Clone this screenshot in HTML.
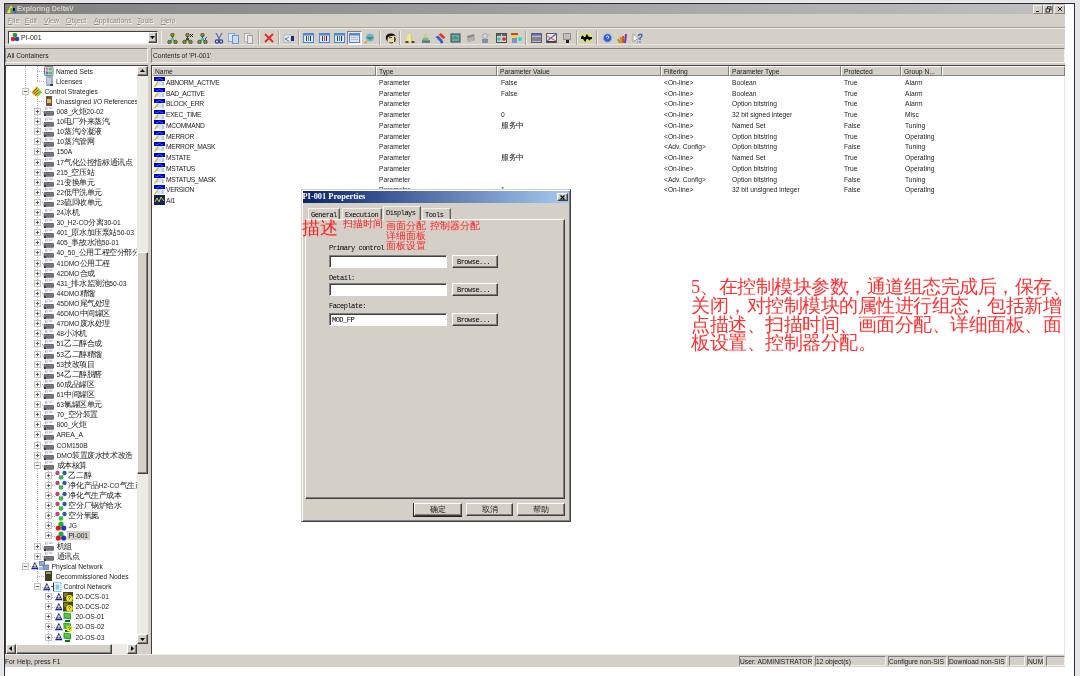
<!DOCTYPE html><html><head><meta charset="utf-8"><style>
*{margin:0;padding:0;box-sizing:border-box}
html,body{width:1080px;height:676px;overflow:hidden;background:#e5e5e7;font-family:"Liberation Sans",sans-serif;}
.ab{position:absolute}
.t{position:absolute;white-space:nowrap;font-size:6.7px;line-height:8px;color:#1c1c1c}
.sunk{border-top:1px solid #808080;border-left:1px solid #808080;border-bottom:1px solid #f2f1ed;border-right:1px solid #f2f1ed}
.rais{border-top:1px solid #fff;border-left:1px solid #fff;border-bottom:1px solid #404040;border-right:1px solid #404040;background:#d4d0c8}
.btn{position:absolute;background:#d4d0c8;border:1px solid;border-color:#fff #404040 #404040 #fff;box-shadow:inset -1px -1px 0 #808080}
.exp{position:absolute;width:6px;height:6px;border:1px solid #a0a0a0;background:#fff}
.exp:before{content:"";position:absolute;left:1px;top:2px;width:2px;height:1px;background:#000}
.exp.p:after{content:"";position:absolute;left:2px;top:1px;width:1px;height:3px;background:#000}
.vl{position:absolute;width:0;border-left:1px dotted #b4b4b4}
.hl{position:absolute;height:0;border-top:1px dotted #b4b4b4}
.red{color:#ff2020}
</style></head><body><div id="root" style="position:absolute;left:0;top:0;width:1080px;height:676px;overflow:hidden;will-change:transform">
<div class="ab" style="left:3px;top:2px;width:1073px;height:680px;background:#ededef"></div>
<div class="ab" style="left:4px;top:3px;width:1071px;height:680px;background:#fff;border:1px solid #2a2a2a"></div>
<div class="ab" style="left:5px;top:4px;width:1060px;height:663px;background:#d4d0c8"></div>
<div class="ab" style="left:5px;top:4px;width:1060px;height:10px;background:linear-gradient(90deg,#808080,#c0c0c0)"></div>
<div class="t" style="left:17px;top:5px;font-size:7.1px;font-weight:bold;color:#d8d4cc;line-height:8px">Exploring DeltaV</div>
<svg class="ab" style="left:6px;top:4px" width="11" height="10"><polygon points="1,9 5,1 7,5 4,9" fill="#e0f020"/><circle cx="6" cy="6" r="2" fill="#40a0a0"/><rect x="7" y="4" width="2" height="3" fill="#000"/><circle cx="9" cy="8" r="1.5" fill="#4070d0"/></svg>
<div class="ab" style="left:1033.0px;top:4.5px;width:9.5px;height:9px;background:#d4d0c8;border:1px solid;border-color:#f0efea #808080 #808080 #f0efea"></div>
<div class="ab" style="left:1043.0px;top:4.5px;width:9.5px;height:9px;background:#d4d0c8;border:1px solid;border-color:#f0efea #808080 #808080 #f0efea"></div>
<div class="ab" style="left:1054.0px;top:4.5px;width:10.5px;height:9px;background:#d4d0c8;border:1px solid;border-color:#f0efea #808080 #808080 #f0efea"></div>
<div class="ab" style="left:1036px;top:10.5px;width:3px;height:1.2px;background:#202020"></div>
<svg class="ab" style="left:1045px;top:6px" width="7" height="7"><rect x="2.5" y="0.8" width="3.5" height="3" fill="none" stroke="#202020" stroke-width="0.9"/><rect x="1" y="2.8" width="3.5" height="3.2" fill="#d4d0c8" stroke="#202020" stroke-width="0.9"/></svg>
<svg class="ab" style="left:1056.5px;top:6.3px" width="6" height="6"><path d="M0.8,0.8L5.2,5.2M5.2,0.8L0.8,5.2" stroke="#202020" stroke-width="1"/></svg>
<div class="t" style="left:8px;top:17px;color:#8e8b86;text-shadow:0.6px 0.6px 0 #fff;font-size:7px"><u style="text-decoration-thickness:0.6px;text-underline-offset:1px">F</u>ile</div>
<div class="t" style="left:25px;top:17px;color:#8e8b86;text-shadow:0.6px 0.6px 0 #fff;font-size:7px"><u style="text-decoration-thickness:0.6px;text-underline-offset:1px">E</u>dit</div>
<div class="t" style="left:44px;top:17px;color:#8e8b86;text-shadow:0.6px 0.6px 0 #fff;font-size:7px"><u style="text-decoration-thickness:0.6px;text-underline-offset:1px">V</u>iew</div>
<div class="t" style="left:66px;top:17px;color:#8e8b86;text-shadow:0.6px 0.6px 0 #fff;font-size:7px"><u style="text-decoration-thickness:0.6px;text-underline-offset:1px">O</u>bject</div>
<div class="t" style="left:94px;top:17px;color:#8e8b86;text-shadow:0.6px 0.6px 0 #fff;font-size:7px"><u style="text-decoration-thickness:0.6px;text-underline-offset:1px">A</u>pplications</div>
<div class="t" style="left:137px;top:17px;color:#8e8b86;text-shadow:0.6px 0.6px 0 #fff;font-size:7px"><u style="text-decoration-thickness:0.6px;text-underline-offset:1px">T</u>ools</div>
<div class="t" style="left:161px;top:17px;color:#8e8b86;text-shadow:0.6px 0.6px 0 #fff;font-size:7px"><u style="text-decoration-thickness:0.6px;text-underline-offset:1px">H</u>elp</div>
<div class="ab" style="left:5px;top:27px;width:1060px;height:1px;background:#a8a49c"></div>
<div class="ab" style="left:5px;top:28px;width:1060px;height:1px;background:#ecebe6"></div>
<div class="ab sunk" style="left:8px;top:31px;width:150px;height:13px;background:#fff;border-top-color:#404040;border-left-color:#404040"></div>
<div class="btn" style="left:148px;top:32px;width:9px;height:11px"></div>
<svg class="ab" style="left:150px;top:36px" width="5" height="3"><polygon points="0,0 5,0 2.5,3" fill="#000"/></svg>
<svg class="ab" style="left:10px;top:32px" width="10" height="10"><circle cx="5" cy="3" r="2.3" fill="#20a020"/><circle cx="3" cy="7" r="2.3" fill="#e02020"/><circle cx="7" cy="7" r="2.3" fill="#2040d0"/></svg>
<div class="t" style="left:21px;top:34px;font-size:7px">PI-001</div>
<div class="ab" style="left:5px;top:44px;width:1060px;height:1px;background:#e6e4de"></div>
<div class="ab" style="left:161px;top:31px;width:1px;height:14px;background:#ecebe6"></div>
<div class="ab" style="left:257.5px;top:31px;width:1px;height:14px;background:#aaa69e"></div><div class="ab" style="left:258.5px;top:31px;width:1px;height:14px;background:#ecebe6"></div>
<div class="ab" style="left:277.5px;top:31px;width:1px;height:14px;background:#aaa69e"></div><div class="ab" style="left:278.5px;top:31px;width:1px;height:14px;background:#ecebe6"></div>
<div class="ab" style="left:297.5px;top:31px;width:1px;height:14px;background:#aaa69e"></div><div class="ab" style="left:298.5px;top:31px;width:1px;height:14px;background:#ecebe6"></div>
<div class="ab" style="left:379.0px;top:31px;width:1px;height:14px;background:#aaa69e"></div><div class="ab" style="left:380.0px;top:31px;width:1px;height:14px;background:#ecebe6"></div>
<div class="ab" style="left:399.0px;top:31px;width:1px;height:14px;background:#aaa69e"></div><div class="ab" style="left:400.0px;top:31px;width:1px;height:14px;background:#ecebe6"></div>
<div class="ab" style="left:525.0px;top:31px;width:1px;height:14px;background:#aaa69e"></div><div class="ab" style="left:526.0px;top:31px;width:1px;height:14px;background:#ecebe6"></div>
<div class="ab" style="left:576.0px;top:31px;width:1px;height:14px;background:#aaa69e"></div><div class="ab" style="left:577.0px;top:31px;width:1px;height:14px;background:#ecebe6"></div>
<div class="ab" style="left:596.0px;top:31px;width:1px;height:14px;background:#aaa69e"></div><div class="ab" style="left:597.0px;top:31px;width:1px;height:14px;background:#ecebe6"></div>
<svg class="ab" style="left:166.5px;top:32.5px" width="12" height="11"><path d="M5.5,2L5.5,6M5.5,6L2.5,9M5.5,6L8.5,9" stroke="#404020" stroke-width="1"/><circle cx="5.5" cy="2" r="1.8" fill="#8a8a30" stroke="#303010" stroke-width="0.6"/><circle cx="2.5" cy="9" r="1.8" fill="#8a8a30" stroke="#303010" stroke-width="0.6"/><circle cx="8.5" cy="9" r="1.8" fill="#8a8a30" stroke="#303010" stroke-width="0.6"/><circle cx="5.5" cy="6" r="1.6" fill="#20d0d0"/><path d="M7,2L11,3L8,5" fill="#e0e020"/></svg>
<svg class="ab" style="left:181.5px;top:32.5px" width="12" height="11"><path d="M5.5,2L5.5,6M5.5,6L2.5,9M5.5,6L8.5,9" stroke="#404020" stroke-width="1"/><circle cx="5.5" cy="2" r="1.8" fill="#8a8a30" stroke="#303010" stroke-width="0.6"/><circle cx="2.5" cy="9" r="1.8" fill="#8a8a30" stroke="#303010" stroke-width="0.6"/><circle cx="8.5" cy="9" r="1.8" fill="#8a8a30" stroke="#303010" stroke-width="0.6"/><circle cx="5.5" cy="6" r="1.6" fill="#105030"/><path d="M8,1L11,4M11,1L8,4" stroke="#202020" stroke-width="1"/></svg>
<svg class="ab" style="left:196.5px;top:32.5px" width="12" height="11"><path d="M5.5,2L5.5,6M5.5,6L2.5,9M5.5,6L8.5,9" stroke="#404020" stroke-width="1"/><circle cx="5.5" cy="2" r="1.8" fill="#8a8a30" stroke="#303010" stroke-width="0.6"/><circle cx="2.5" cy="9" r="1.8" fill="#8a8a30" stroke="#303010" stroke-width="0.6"/><circle cx="8.5" cy="9" r="1.8" fill="#8a8a30" stroke="#303010" stroke-width="0.6"/><circle cx="5.5" cy="6" r="1.6" fill="#20c0d0"/><path d="M10,4L8,6L10,8" stroke="#4050c0" stroke-width="1" fill="none"/></svg>
<svg class="ab" style="left:214.0px;top:32.5px" width="10" height="11"><path d="M2,0L6,7M8,0L4,7" stroke="#6070b0" stroke-width="1.2"/><circle cx="3" cy="8.5" r="1.7" fill="none" stroke="#3040a0" stroke-width="1.2"/><circle cx="7" cy="8.5" r="1.7" fill="none" stroke="#3040a0" stroke-width="1.2"/></svg>
<svg class="ab" style="left:228.0px;top:32.5px" width="12" height="11"><rect x="0.5" y="0.5" width="6" height="8" fill="#d8e8ff" stroke="#90a8d8"/><rect x="4.5" y="2.5" width="6" height="8" fill="#c8dcff" stroke="#7090d0"/></svg>
<svg class="ab" style="left:244.0px;top:32.5px" width="10" height="11"><rect x="0.5" y="0.5" width="5" height="8" fill="#f0f0f0" stroke="#b0b0b0"/><rect x="3.5" y="2.5" width="5" height="8" fill="#e8e8e8" stroke="#a0a0a0"/></svg>
<svg class="ab" style="left:263.5px;top:32.5px" width="10" height="11"><path d="M1,1L9,9M9,1L1,9" stroke="#e02828" stroke-width="1.8"/></svg>
<svg class="ab" style="left:283.0px;top:32.5px" width="12" height="11"><rect x="1" y="2" width="7" height="7" fill="#e8f0f8" stroke="#a0a8b0" stroke-width="0.7"/><path d="M2,6L6,4M2,6L6,8" stroke="#5080a0" stroke-width="1"/><rect x="8" y="3" width="3" height="5" fill="#202880"/></svg>
<svg class="ab" style="left:303.0px;top:32.5px" width="12" height="11"><rect x="0.5" y="0.5" width="10" height="9" fill="#d8e8f8" stroke="#4a88d8"/><rect x="1" y="1" width="9" height="1.5" fill="#4a88d8"/><rect x="3" y="3" width="1" height="5" fill="#404040"/><rect x="5" y="3" width="1" height="5" fill="#50a050"/><rect x="7" y="3" width="1" height="5" fill="#303030"/></svg>
<svg class="ab" style="left:318.5px;top:32.5px" width="12" height="11"><rect x="0.5" y="0.5" width="10" height="9" fill="#d8e8f8" stroke="#4a88d8"/><rect x="1" y="1" width="9" height="1.5" fill="#4a88d8"/><rect x="3" y="3" width="1" height="5" fill="#404040"/><rect x="5" y="3" width="1" height="5" fill="#e04040"/><rect x="7" y="3" width="1" height="5" fill="#303030"/></svg>
<svg class="ab" style="left:334.0px;top:32.5px" width="12" height="11"><rect x="0.5" y="0.5" width="10" height="9" fill="#d8e8f8" stroke="#4a88d8"/><rect x="1" y="1" width="9" height="1.5" fill="#4a88d8"/><rect x="3" y="3" width="1" height="5" fill="#404040"/><rect x="5" y="3" width="1" height="5" fill="#40a040"/><rect x="7" y="3" width="1" height="5" fill="#303030"/></svg>
<div class="ab" style="left:346.5px;top:30.5px;width:15px;height:14.5px;background:#ecebe8;border:1px solid;border-color:#808080 #fff #fff #808080"></div>
<svg class="ab" style="left:349.0px;top:32.5px" width="12" height="11"><rect x="0.5" y="0.5" width="10" height="9" fill="#d8e8f8" stroke="#4a88d8"/><rect x="1" y="1" width="9" height="1.5" fill="#4a88d8"/><path d="M2,4.5h7M2,6.5h7" stroke="#e0a0a0" stroke-width="0.8"/></svg>
<svg class="ab" style="left:363.5px;top:32.5px" width="12" height="11"><circle cx="6" cy="4.5" r="4" fill="#70b0e8"/><path d="M2,4h8L6,7z" fill="#30a030"/><path d="M0.5,10.5L3,8" stroke="#d0a040" stroke-width="1.5"/></svg>
<svg class="ab" style="left:384.5px;top:32.5px" width="12" height="11"><path d="M1,6Q0,1 5,0.5Q10,0 10.5,3Q9,2 7,3L3,4Q2,6 2.5,9z" fill="#101010"/><ellipse cx="6.5" cy="6.5" rx="3" ry="3.6" fill="#e8d8a8"/><path d="M4,5Q5,4 7,4.5M4.5,9.5Q6,10.5 8,9.5" stroke="#302010" stroke-width="0.9" fill="none"/><path d="M9.5,4Q11,6 9.5,9" stroke="#101010" stroke-width="1"/></svg>
<svg class="ab" style="left:405.0px;top:32.5px" width="10" height="11"><path d="M4.5,0.8Q6.5,0.8 6.8,3.5L7.8,8.5H1.2L2.3,3.5Q2.8,0.8 4.5,0.8z" fill="#f8e890"/><path d="M6,2L7,8" stroke="#d0b050" stroke-width="0.8"/><ellipse cx="2" cy="9" rx="1.8" ry="0.9" fill="#503010"/><ellipse cx="8" cy="9" rx="1.8" ry="0.9" fill="#503010"/></svg>
<svg class="ab" style="left:420.5px;top:32.5px" width="10" height="11"><circle cx="4.5" cy="1.8" r="1.5" fill="#c8d080"/><rect x="3" y="3.3" width="3" height="1.5" fill="#c0c0c0"/><rect x="1.5" y="4.8" width="6" height="2.5" fill="#80c050"/><rect x="1" y="7.3" width="8" height="2.5" fill="#5870a0"/></svg>
<svg class="ab" style="left:435.0px;top:32.5px" width="11" height="11"><polygon points="3.5,1.5 6,0 10.5,4.5 8,6" fill="#f03818"/><polygon points="0.5,4 3,2.5 7.5,7 5,8.5" fill="#2868d0"/><polygon points="5,8.5 7.5,7 8,10 6,10.5" fill="#1850b0"/></svg>
<svg class="ab" style="left:449.5px;top:32.5px" width="12" height="11"><rect x="0.5" y="0.5" width="10" height="9" fill="#404040"/><rect x="1.5" y="1.5" width="8" height="7" fill="#60a8c8"/><path d="M1.5,6L5,3L9.5,6" fill="#40a040"/></svg>
<svg class="ab" style="left:466.0px;top:32.5px" width="10" height="11"><polygon points="1,3 8,1 9,7 2,9" fill="#888"/><polygon points="2,5 9,3 9,7 2,9" fill="#b0b0b0"/></svg>
<svg class="ab" style="left:480.5px;top:32.5px" width="10" height="11"><circle cx="4" cy="3" r="2.5" fill="#d0d8e0" stroke="#909090" stroke-width="0.7"/><rect x="1" y="6" width="6" height="4" fill="#8090a8"/><path d="M7,1L9,3" stroke="#e0b080"/></svg>
<svg class="ab" style="left:495.5px;top:32.5px" width="12" height="11"><rect x="0.5" y="0.5" width="10" height="9" fill="#d0d0d0" stroke="#505050"/><rect x="1" y="1" width="4" height="2" fill="#606060"/><rect x="6" y="1" width="4" height="2" fill="#606060"/><circle cx="3" cy="6" r="1.8" fill="#20d0d0"/><circle cx="8" cy="6" r="1.8" fill="#e02020"/></svg>
<svg class="ab" style="left:510.8px;top:32.5px" width="12" height="11"><rect x="0" y="0" width="7" height="2" fill="#d04040"/><rect x="0" y="2" width="7" height="3" fill="#e0e040"/><rect x="1" y="5" width="5" height="5" fill="#8090d0"/><circle cx="9" cy="6" r="2" fill="#20d8e0"/></svg>
<svg class="ab" style="left:530.7px;top:32.5px" width="12" height="11"><rect x="0.5" y="0.5" width="10" height="9" fill="#b8b8c8" stroke="#606070"/><rect x="1" y="1" width="9" height="1.5" fill="#6060c0"/><path d="M1,5h9M1,7h9" stroke="#505050" stroke-width="1"/></svg>
<svg class="ab" style="left:546.0px;top:32.5px" width="12" height="11"><rect x="0.5" y="0.5" width="10" height="9" fill="#f0e0e0" stroke="#606060"/><path d="M1,8L10,1" stroke="#4070d0" stroke-width="1.2"/><path d="M1,3L10,8" stroke="#e05050" stroke-width="1"/><rect x="1" y="8" width="9" height="1.5" fill="#404040"/></svg>
<svg class="ab" style="left:562.7px;top:32.5px" width="10" height="11"><rect x="0" y="0" width="8" height="7" fill="#909090"/><rect x="1" y="1" width="6" height="5" fill="#c0c0c0"/><rect x="3" y="7" width="3" height="3" fill="#202020"/></svg>
<svg class="ab" style="left:581.0px;top:32.5px" width="12" height="11"><rect x="0" y="1" width="11" height="8" fill="#e0e060"/><path d="M1,3L4,7L6,3L9,7M0,5h11" stroke="#000" stroke-width="2"/></svg>
<svg class="ab" style="left:603.0px;top:32.5px" width="10" height="11"><circle cx="4.5" cy="5" r="4.3" fill="#3060d0" stroke="#a0c0f0" stroke-width="0.8"/><path d="M3,4Q4.5,2 6,4L4.5,6" stroke="#fff" stroke-width="0.9" fill="none"/></svg>
<svg class="ab" style="left:617.3px;top:32.5px" width="12" height="11"><path d="M1,6L3,10M3.5,4L5,10M6,3L6.5,10M9,1L8,10" stroke-width="2" stroke="#c09020"/><path d="M6,3L6.5,10" stroke="#e04020" stroke-width="1.5"/><path d="M9,1L8,10" stroke="#6040d0" stroke-width="1.8"/></svg>
<svg class="ab" style="left:632.0px;top:32.5px" width="12" height="11"><polygon points="1,1 1,9 3,7 5,10 6,9 4,6 7,6" fill="#fff" stroke="#808080" stroke-width="0.6"/><path d="M6,3Q8,0 10,2Q10,4 8,5L8,7" stroke="#3060c0" stroke-width="1.3" fill="none"/><circle cx="8" cy="9" r="0.8" fill="#3060c0"/></svg>
<div class="ab sunk" style="left:5px;top:48px;width:143px;height:15px"></div>
<div class="t" style="left:7px;top:52px">All Containers</div>
<div class="ab sunk" style="left:151px;top:48px;width:914px;height:15px"></div>
<div class="t" style="left:153px;top:52px">Contents of 'PI-001'</div>
<div class="ab" style="left:5px;top:65px;width:143px;height:589px;background:#fff;border-top:1px solid #404040;border-left:1px solid #404040"></div>
<div class="ab" style="left:6px;top:66px;width:131px;height:578px;overflow:hidden">
<div class="vl" style="left:19.0px;top:0.0px;height:500.2px"></div>
<div class="vl" style="left:30.5px;top:0.0px;height:15.1px"></div>
<div class="vl" style="left:30.5px;top:28.2px;height:461.9px"></div>
<div class="vl" style="left:42.0px;top:402.2px;height:67.7px"></div>
<div class="vl" style="left:30.5px;top:503.2px;height:17.2px"></div>
<div class="vl" style="left:42.0px;top:523.5px;height:54.5px"></div>
<div class="hl" style="left:31.0px;top:5.0px;width:6.5px"></div>
<div class="hl" style="left:31.0px;top:15.1px;width:6.5px"></div>
<div class="hl" style="left:22.0px;top:25.2px;width:3.0px"></div>
<div class="hl" style="left:31.0px;top:35.3px;width:6.5px"></div>
<div class="hl" style="left:34.0px;top:45.4px;width:2.6px"></div>
<div class="hl" style="left:34.0px;top:55.5px;width:2.6px"></div>
<div class="hl" style="left:34.0px;top:65.6px;width:2.6px"></div>
<div class="hl" style="left:34.0px;top:75.7px;width:2.6px"></div>
<div class="hl" style="left:34.0px;top:85.9px;width:2.6px"></div>
<div class="hl" style="left:34.0px;top:96.0px;width:2.6px"></div>
<div class="hl" style="left:34.0px;top:106.1px;width:2.6px"></div>
<div class="hl" style="left:34.0px;top:116.2px;width:2.6px"></div>
<div class="hl" style="left:34.0px;top:126.3px;width:2.6px"></div>
<div class="hl" style="left:34.0px;top:136.4px;width:2.6px"></div>
<div class="hl" style="left:34.0px;top:146.5px;width:2.6px"></div>
<div class="hl" style="left:34.0px;top:156.6px;width:2.6px"></div>
<div class="hl" style="left:34.0px;top:166.7px;width:2.6px"></div>
<div class="hl" style="left:34.0px;top:176.8px;width:2.6px"></div>
<div class="hl" style="left:34.0px;top:186.9px;width:2.6px"></div>
<div class="hl" style="left:34.0px;top:197.0px;width:2.6px"></div>
<div class="hl" style="left:34.0px;top:207.1px;width:2.6px"></div>
<div class="hl" style="left:34.0px;top:217.2px;width:2.6px"></div>
<div class="hl" style="left:34.0px;top:227.4px;width:2.6px"></div>
<div class="hl" style="left:34.0px;top:237.5px;width:2.6px"></div>
<div class="hl" style="left:34.0px;top:247.6px;width:2.6px"></div>
<div class="hl" style="left:34.0px;top:257.7px;width:2.6px"></div>
<div class="hl" style="left:34.0px;top:267.8px;width:2.6px"></div>
<div class="hl" style="left:34.0px;top:277.9px;width:2.6px"></div>
<div class="hl" style="left:34.0px;top:288.0px;width:2.6px"></div>
<div class="hl" style="left:34.0px;top:298.1px;width:2.6px"></div>
<div class="hl" style="left:34.0px;top:308.2px;width:2.6px"></div>
<div class="hl" style="left:34.0px;top:318.3px;width:2.6px"></div>
<div class="hl" style="left:34.0px;top:328.4px;width:2.6px"></div>
<div class="hl" style="left:34.0px;top:338.5px;width:2.6px"></div>
<div class="hl" style="left:34.0px;top:348.6px;width:2.6px"></div>
<div class="hl" style="left:34.0px;top:358.7px;width:2.6px"></div>
<div class="hl" style="left:34.0px;top:368.9px;width:2.6px"></div>
<div class="hl" style="left:34.0px;top:379.0px;width:2.6px"></div>
<div class="hl" style="left:34.0px;top:389.1px;width:2.6px"></div>
<div class="hl" style="left:34.0px;top:399.2px;width:2.6px"></div>
<div class="hl" style="left:45.0px;top:409.3px;width:3.5px"></div>
<div class="hl" style="left:45.0px;top:419.4px;width:3.5px"></div>
<div class="hl" style="left:45.0px;top:429.5px;width:3.5px"></div>
<div class="hl" style="left:45.0px;top:439.6px;width:3.5px"></div>
<div class="hl" style="left:45.0px;top:449.7px;width:3.5px"></div>
<div class="hl" style="left:45.0px;top:459.8px;width:3.5px"></div>
<div class="hl" style="left:45.0px;top:469.9px;width:3.5px"></div>
<div class="hl" style="left:34.0px;top:480.0px;width:2.6px"></div>
<div class="hl" style="left:34.0px;top:490.1px;width:2.6px"></div>
<div class="hl" style="left:22.0px;top:500.2px;width:3.0px"></div>
<div class="hl" style="left:31.0px;top:510.3px;width:7.0px"></div>
<div class="hl" style="left:34.0px;top:520.5px;width:2.6px"></div>
<div class="hl" style="left:45.0px;top:530.6px;width:4.0px"></div>
<div class="hl" style="left:45.0px;top:540.7px;width:4.0px"></div>
<div class="hl" style="left:45.0px;top:550.8px;width:4.0px"></div>
<div class="hl" style="left:45.0px;top:560.9px;width:4.0px"></div>
<div class="hl" style="left:45.0px;top:571.0px;width:4.0px"></div>
<svg class="ab" style="left:37.5px;top:0.0px" width="10" height="10"><rect x="0.5" y="0.3" width="8.5" height="9.4" rx="1.2" fill="#f4f4f8" stroke="#404040" stroke-width="0.7"/><rect x="1.6" y="1.4" width="3" height="3.2" fill="#e08090"/><rect x="5" y="1.4" width="3" height="3.2" fill="#60b8a0"/><rect x="1.6" y="5.4" width="3" height="3.2" fill="#5080d0"/><rect x="5" y="5.4" width="3" height="3.2" fill="#60c060"/></svg>
<div class="t" style="left:50.0px;top:1.5px">Named Sets</div>
<svg class="ab" style="left:37.5px;top:10.1px" width="10" height="10"><rect x="2" y="0" width="7" height="10" fill="#a0b0c8"/><rect x="3" y="2" width="4" height="6" fill="#c0d0e0"/><rect x="6" y="8" width="3" height="2" fill="#404040"/></svg>
<div class="t" style="left:50.0px;top:11.6px">Licenses</div>
<svg class="ab" style="left:15.8px;top:21.7px" width="7" height="7"><rect x="0.5" y="0.5" width="6" height="6" fill="#f8f8f8" stroke="#c4c4c4"/><path d="M1.8,3.5H5.2" stroke="#404040" stroke-width="0.8"/></svg>
<svg class="ab" style="left:24.5px;top:19.7px" width="12" height="11"><polygon points="5.5,0.3 11,6.5 6,10.8 0.5,7" fill="#e8c010"/><path d="M1.5,6.2L6.5,1.8M2.5,8L8,3.3M4,9.5L9.5,4.8" stroke="#904000" stroke-width="1"/><polygon points="5.5,0.3 11,6.5 6,10.8 8,5" fill="#58d820" opacity="0.85"/><path d="M7,2.5L9.5,5M6.5,5L9,7.5" stroke="#a0f060" stroke-width="0.6"/></svg>
<div class="t" style="left:38.4px;top:21.7px">Control Strategies</div>
<svg class="ab" style="left:37.5px;top:30.3px" width="10" height="10"><rect x="2" y="0" width="6" height="10" fill="#705040"/><rect x="3" y="3" width="4" height="4" fill="#e0c040"/></svg>
<div class="t" style="left:50.0px;top:31.8px">Unassigned I/O References</div>
<svg class="ab" style="left:27.8px;top:41.9px" width="7" height="7"><rect x="0.5" y="0.5" width="6" height="6" fill="#f8f8f8" stroke="#c4c4c4"/><path d="M1.8,3.5H5.2" stroke="#404040" stroke-width="0.8"/><path d="M3.5,1.8V5.2" stroke="#404040" stroke-width="0.8"/></svg>
<svg class="ab" style="left:36.6px;top:40.4px" width="12" height="11"><rect x="1.5" y="0.5" width="9" height="1" fill="#d8e0f8"/><path d="M2.5,1.5v2.2M4,1.5v2.2M6,2.2h3.5" stroke="#8898c8" stroke-width="0.8"/><rect x="0.7" y="5" width="10.3" height="4.8" rx="1.2" fill="#686868"/><path d="M1.5,6.5h8.5M1.5,8h8.5" stroke="#8a8a8a" stroke-width="0.6"/><rect x="1" y="8.4" width="2" height="1.4" fill="#202020"/></svg>
<div class="t" style="left:50.5px;top:41.9px">008_<span style="display:inline-block;width:7.60px;font-size:8.0px;line-height:8px;vertical-align:top;font-weight:500">火</span><span style="display:inline-block;width:7.60px;font-size:8.0px;line-height:8px;vertical-align:top;font-weight:500">炬</span>20-02</div>
<svg class="ab" style="left:27.8px;top:52.0px" width="7" height="7"><rect x="0.5" y="0.5" width="6" height="6" fill="#f8f8f8" stroke="#c4c4c4"/><path d="M1.8,3.5H5.2" stroke="#404040" stroke-width="0.8"/><path d="M3.5,1.8V5.2" stroke="#404040" stroke-width="0.8"/></svg>
<svg class="ab" style="left:36.6px;top:50.5px" width="12" height="11"><rect x="1.5" y="0.5" width="9" height="1" fill="#d8e0f8"/><path d="M2.5,1.5v2.2M4,1.5v2.2M6,2.2h3.5" stroke="#8898c8" stroke-width="0.8"/><rect x="0.7" y="5" width="10.3" height="4.8" rx="1.2" fill="#686868"/><path d="M1.5,6.5h8.5M1.5,8h8.5" stroke="#8a8a8a" stroke-width="0.6"/><rect x="1" y="8.4" width="2" height="1.4" fill="#202020"/></svg>
<div class="t" style="left:50.5px;top:52.0px">10<span style="display:inline-block;width:7.60px;font-size:8.0px;line-height:8px;vertical-align:top;font-weight:500">电</span><span style="display:inline-block;width:7.60px;font-size:8.0px;line-height:8px;vertical-align:top;font-weight:500">厂</span><span style="display:inline-block;width:7.60px;font-size:8.0px;line-height:8px;vertical-align:top;font-weight:500">外</span><span style="display:inline-block;width:7.60px;font-size:8.0px;line-height:8px;vertical-align:top;font-weight:500">来</span><span style="display:inline-block;width:7.60px;font-size:8.0px;line-height:8px;vertical-align:top;font-weight:500">蒸</span><span style="display:inline-block;width:7.60px;font-size:8.0px;line-height:8px;vertical-align:top;font-weight:500">汽</span></div>
<svg class="ab" style="left:27.8px;top:62.1px" width="7" height="7"><rect x="0.5" y="0.5" width="6" height="6" fill="#f8f8f8" stroke="#c4c4c4"/><path d="M1.8,3.5H5.2" stroke="#404040" stroke-width="0.8"/><path d="M3.5,1.8V5.2" stroke="#404040" stroke-width="0.8"/></svg>
<svg class="ab" style="left:36.6px;top:60.6px" width="12" height="11"><rect x="1.5" y="0.5" width="9" height="1" fill="#d8e0f8"/><path d="M2.5,1.5v2.2M4,1.5v2.2M6,2.2h3.5" stroke="#8898c8" stroke-width="0.8"/><rect x="0.7" y="5" width="10.3" height="4.8" rx="1.2" fill="#686868"/><path d="M1.5,6.5h8.5M1.5,8h8.5" stroke="#8a8a8a" stroke-width="0.6"/><rect x="1" y="8.4" width="2" height="1.4" fill="#202020"/></svg>
<div class="t" style="left:50.5px;top:62.1px">10<span style="display:inline-block;width:7.60px;font-size:8.0px;line-height:8px;vertical-align:top;font-weight:500">蒸</span><span style="display:inline-block;width:7.60px;font-size:8.0px;line-height:8px;vertical-align:top;font-weight:500">汽</span><span style="display:inline-block;width:7.60px;font-size:8.0px;line-height:8px;vertical-align:top;font-weight:500">冷</span><span style="display:inline-block;width:7.60px;font-size:8.0px;line-height:8px;vertical-align:top;font-weight:500">凝</span><span style="display:inline-block;width:7.60px;font-size:8.0px;line-height:8px;vertical-align:top;font-weight:500">液</span></div>
<svg class="ab" style="left:27.8px;top:72.2px" width="7" height="7"><rect x="0.5" y="0.5" width="6" height="6" fill="#f8f8f8" stroke="#c4c4c4"/><path d="M1.8,3.5H5.2" stroke="#404040" stroke-width="0.8"/><path d="M3.5,1.8V5.2" stroke="#404040" stroke-width="0.8"/></svg>
<svg class="ab" style="left:36.6px;top:70.7px" width="12" height="11"><rect x="1.5" y="0.5" width="9" height="1" fill="#d8e0f8"/><path d="M2.5,1.5v2.2M4,1.5v2.2M6,2.2h3.5" stroke="#8898c8" stroke-width="0.8"/><rect x="0.7" y="5" width="10.3" height="4.8" rx="1.2" fill="#686868"/><path d="M1.5,6.5h8.5M1.5,8h8.5" stroke="#8a8a8a" stroke-width="0.6"/><rect x="1" y="8.4" width="2" height="1.4" fill="#202020"/></svg>
<div class="t" style="left:50.5px;top:72.2px">10<span style="display:inline-block;width:7.60px;font-size:8.0px;line-height:8px;vertical-align:top;font-weight:500">蒸</span><span style="display:inline-block;width:7.60px;font-size:8.0px;line-height:8px;vertical-align:top;font-weight:500">汽</span><span style="display:inline-block;width:7.60px;font-size:8.0px;line-height:8px;vertical-align:top;font-weight:500">管</span><span style="display:inline-block;width:7.60px;font-size:8.0px;line-height:8px;vertical-align:top;font-weight:500">网</span></div>
<svg class="ab" style="left:27.8px;top:82.4px" width="7" height="7"><rect x="0.5" y="0.5" width="6" height="6" fill="#f8f8f8" stroke="#c4c4c4"/><path d="M1.8,3.5H5.2" stroke="#404040" stroke-width="0.8"/><path d="M3.5,1.8V5.2" stroke="#404040" stroke-width="0.8"/></svg>
<svg class="ab" style="left:36.6px;top:80.9px" width="12" height="11"><rect x="1.5" y="0.5" width="9" height="1" fill="#d8e0f8"/><path d="M2.5,1.5v2.2M4,1.5v2.2M6,2.2h3.5" stroke="#8898c8" stroke-width="0.8"/><rect x="0.7" y="5" width="10.3" height="4.8" rx="1.2" fill="#686868"/><path d="M1.5,6.5h8.5M1.5,8h8.5" stroke="#8a8a8a" stroke-width="0.6"/><rect x="1" y="8.4" width="2" height="1.4" fill="#202020"/></svg>
<div class="t" style="left:50.5px;top:82.4px">150A</div>
<svg class="ab" style="left:27.8px;top:92.5px" width="7" height="7"><rect x="0.5" y="0.5" width="6" height="6" fill="#f8f8f8" stroke="#c4c4c4"/><path d="M1.8,3.5H5.2" stroke="#404040" stroke-width="0.8"/><path d="M3.5,1.8V5.2" stroke="#404040" stroke-width="0.8"/></svg>
<svg class="ab" style="left:36.6px;top:91.0px" width="12" height="11"><rect x="1.5" y="0.5" width="9" height="1" fill="#d8e0f8"/><path d="M2.5,1.5v2.2M4,1.5v2.2M6,2.2h3.5" stroke="#8898c8" stroke-width="0.8"/><rect x="0.7" y="5" width="10.3" height="4.8" rx="1.2" fill="#686868"/><path d="M1.5,6.5h8.5M1.5,8h8.5" stroke="#8a8a8a" stroke-width="0.6"/><rect x="1" y="8.4" width="2" height="1.4" fill="#202020"/></svg>
<div class="t" style="left:50.5px;top:92.5px">17<span style="display:inline-block;width:7.60px;font-size:8.0px;line-height:8px;vertical-align:top;font-weight:500">气</span><span style="display:inline-block;width:7.60px;font-size:8.0px;line-height:8px;vertical-align:top;font-weight:500">化</span><span style="display:inline-block;width:7.60px;font-size:8.0px;line-height:8px;vertical-align:top;font-weight:500">公</span><span style="display:inline-block;width:7.60px;font-size:8.0px;line-height:8px;vertical-align:top;font-weight:500">控</span><span style="display:inline-block;width:7.60px;font-size:8.0px;line-height:8px;vertical-align:top;font-weight:500">指</span><span style="display:inline-block;width:7.60px;font-size:8.0px;line-height:8px;vertical-align:top;font-weight:500">标</span><span style="display:inline-block;width:7.60px;font-size:8.0px;line-height:8px;vertical-align:top;font-weight:500">通</span><span style="display:inline-block;width:7.60px;font-size:8.0px;line-height:8px;vertical-align:top;font-weight:500">讯</span><span style="display:inline-block;width:7.60px;font-size:8.0px;line-height:8px;vertical-align:top;font-weight:500">点</span></div>
<svg class="ab" style="left:27.8px;top:102.6px" width="7" height="7"><rect x="0.5" y="0.5" width="6" height="6" fill="#f8f8f8" stroke="#c4c4c4"/><path d="M1.8,3.5H5.2" stroke="#404040" stroke-width="0.8"/><path d="M3.5,1.8V5.2" stroke="#404040" stroke-width="0.8"/></svg>
<svg class="ab" style="left:36.6px;top:101.1px" width="12" height="11"><rect x="1.5" y="0.5" width="9" height="1" fill="#d8e0f8"/><path d="M2.5,1.5v2.2M4,1.5v2.2M6,2.2h3.5" stroke="#8898c8" stroke-width="0.8"/><rect x="0.7" y="5" width="10.3" height="4.8" rx="1.2" fill="#686868"/><path d="M1.5,6.5h8.5M1.5,8h8.5" stroke="#8a8a8a" stroke-width="0.6"/><rect x="1" y="8.4" width="2" height="1.4" fill="#202020"/></svg>
<div class="t" style="left:50.5px;top:102.6px">215_<span style="display:inline-block;width:7.60px;font-size:8.0px;line-height:8px;vertical-align:top;font-weight:500">空</span><span style="display:inline-block;width:7.60px;font-size:8.0px;line-height:8px;vertical-align:top;font-weight:500">压</span><span style="display:inline-block;width:7.60px;font-size:8.0px;line-height:8px;vertical-align:top;font-weight:500">站</span></div>
<svg class="ab" style="left:27.8px;top:112.7px" width="7" height="7"><rect x="0.5" y="0.5" width="6" height="6" fill="#f8f8f8" stroke="#c4c4c4"/><path d="M1.8,3.5H5.2" stroke="#404040" stroke-width="0.8"/><path d="M3.5,1.8V5.2" stroke="#404040" stroke-width="0.8"/></svg>
<svg class="ab" style="left:36.6px;top:111.2px" width="12" height="11"><rect x="1.5" y="0.5" width="9" height="1" fill="#d8e0f8"/><path d="M2.5,1.5v2.2M4,1.5v2.2M6,2.2h3.5" stroke="#8898c8" stroke-width="0.8"/><rect x="0.7" y="5" width="10.3" height="4.8" rx="1.2" fill="#686868"/><path d="M1.5,6.5h8.5M1.5,8h8.5" stroke="#8a8a8a" stroke-width="0.6"/><rect x="1" y="8.4" width="2" height="1.4" fill="#202020"/></svg>
<div class="t" style="left:50.5px;top:112.7px">21<span style="display:inline-block;width:7.60px;font-size:8.0px;line-height:8px;vertical-align:top;font-weight:500">变</span><span style="display:inline-block;width:7.60px;font-size:8.0px;line-height:8px;vertical-align:top;font-weight:500">换</span><span style="display:inline-block;width:7.60px;font-size:8.0px;line-height:8px;vertical-align:top;font-weight:500">单</span><span style="display:inline-block;width:7.60px;font-size:8.0px;line-height:8px;vertical-align:top;font-weight:500">元</span></div>
<svg class="ab" style="left:27.8px;top:122.8px" width="7" height="7"><rect x="0.5" y="0.5" width="6" height="6" fill="#f8f8f8" stroke="#c4c4c4"/><path d="M1.8,3.5H5.2" stroke="#404040" stroke-width="0.8"/><path d="M3.5,1.8V5.2" stroke="#404040" stroke-width="0.8"/></svg>
<svg class="ab" style="left:36.6px;top:121.3px" width="12" height="11"><rect x="1.5" y="0.5" width="9" height="1" fill="#d8e0f8"/><path d="M2.5,1.5v2.2M4,1.5v2.2M6,2.2h3.5" stroke="#8898c8" stroke-width="0.8"/><rect x="0.7" y="5" width="10.3" height="4.8" rx="1.2" fill="#686868"/><path d="M1.5,6.5h8.5M1.5,8h8.5" stroke="#8a8a8a" stroke-width="0.6"/><rect x="1" y="8.4" width="2" height="1.4" fill="#202020"/></svg>
<div class="t" style="left:50.5px;top:122.8px">22<span style="display:inline-block;width:7.60px;font-size:8.0px;line-height:8px;vertical-align:top;font-weight:500">低</span><span style="display:inline-block;width:7.60px;font-size:8.0px;line-height:8px;vertical-align:top;font-weight:500">甲</span><span style="display:inline-block;width:7.60px;font-size:8.0px;line-height:8px;vertical-align:top;font-weight:500">洗</span><span style="display:inline-block;width:7.60px;font-size:8.0px;line-height:8px;vertical-align:top;font-weight:500">单</span><span style="display:inline-block;width:7.60px;font-size:8.0px;line-height:8px;vertical-align:top;font-weight:500">元</span></div>
<svg class="ab" style="left:27.8px;top:132.9px" width="7" height="7"><rect x="0.5" y="0.5" width="6" height="6" fill="#f8f8f8" stroke="#c4c4c4"/><path d="M1.8,3.5H5.2" stroke="#404040" stroke-width="0.8"/><path d="M3.5,1.8V5.2" stroke="#404040" stroke-width="0.8"/></svg>
<svg class="ab" style="left:36.6px;top:131.4px" width="12" height="11"><rect x="1.5" y="0.5" width="9" height="1" fill="#d8e0f8"/><path d="M2.5,1.5v2.2M4,1.5v2.2M6,2.2h3.5" stroke="#8898c8" stroke-width="0.8"/><rect x="0.7" y="5" width="10.3" height="4.8" rx="1.2" fill="#686868"/><path d="M1.5,6.5h8.5M1.5,8h8.5" stroke="#8a8a8a" stroke-width="0.6"/><rect x="1" y="8.4" width="2" height="1.4" fill="#202020"/></svg>
<div class="t" style="left:50.5px;top:132.9px">23<span style="display:inline-block;width:7.60px;font-size:8.0px;line-height:8px;vertical-align:top;font-weight:500">硫</span><span style="display:inline-block;width:7.60px;font-size:8.0px;line-height:8px;vertical-align:top;font-weight:500">回</span><span style="display:inline-block;width:7.60px;font-size:8.0px;line-height:8px;vertical-align:top;font-weight:500">收</span><span style="display:inline-block;width:7.60px;font-size:8.0px;line-height:8px;vertical-align:top;font-weight:500">单</span><span style="display:inline-block;width:7.60px;font-size:8.0px;line-height:8px;vertical-align:top;font-weight:500">元</span></div>
<svg class="ab" style="left:27.8px;top:143.0px" width="7" height="7"><rect x="0.5" y="0.5" width="6" height="6" fill="#f8f8f8" stroke="#c4c4c4"/><path d="M1.8,3.5H5.2" stroke="#404040" stroke-width="0.8"/><path d="M3.5,1.8V5.2" stroke="#404040" stroke-width="0.8"/></svg>
<svg class="ab" style="left:36.6px;top:141.5px" width="12" height="11"><rect x="1.5" y="0.5" width="9" height="1" fill="#d8e0f8"/><path d="M2.5,1.5v2.2M4,1.5v2.2M6,2.2h3.5" stroke="#8898c8" stroke-width="0.8"/><rect x="0.7" y="5" width="10.3" height="4.8" rx="1.2" fill="#686868"/><path d="M1.5,6.5h8.5M1.5,8h8.5" stroke="#8a8a8a" stroke-width="0.6"/><rect x="1" y="8.4" width="2" height="1.4" fill="#202020"/></svg>
<div class="t" style="left:50.5px;top:143.0px">24<span style="display:inline-block;width:7.60px;font-size:8.0px;line-height:8px;vertical-align:top;font-weight:500">冰</span><span style="display:inline-block;width:7.60px;font-size:8.0px;line-height:8px;vertical-align:top;font-weight:500">机</span></div>
<svg class="ab" style="left:27.8px;top:153.1px" width="7" height="7"><rect x="0.5" y="0.5" width="6" height="6" fill="#f8f8f8" stroke="#c4c4c4"/><path d="M1.8,3.5H5.2" stroke="#404040" stroke-width="0.8"/><path d="M3.5,1.8V5.2" stroke="#404040" stroke-width="0.8"/></svg>
<svg class="ab" style="left:36.6px;top:151.6px" width="12" height="11"><rect x="1.5" y="0.5" width="9" height="1" fill="#d8e0f8"/><path d="M2.5,1.5v2.2M4,1.5v2.2M6,2.2h3.5" stroke="#8898c8" stroke-width="0.8"/><rect x="0.7" y="5" width="10.3" height="4.8" rx="1.2" fill="#686868"/><path d="M1.5,6.5h8.5M1.5,8h8.5" stroke="#8a8a8a" stroke-width="0.6"/><rect x="1" y="8.4" width="2" height="1.4" fill="#202020"/></svg>
<div class="t" style="left:50.5px;top:153.1px">30_H2-CO<span style="display:inline-block;width:7.60px;font-size:8.0px;line-height:8px;vertical-align:top;font-weight:500">分</span><span style="display:inline-block;width:7.60px;font-size:8.0px;line-height:8px;vertical-align:top;font-weight:500">离</span>30-01</div>
<svg class="ab" style="left:27.8px;top:163.2px" width="7" height="7"><rect x="0.5" y="0.5" width="6" height="6" fill="#f8f8f8" stroke="#c4c4c4"/><path d="M1.8,3.5H5.2" stroke="#404040" stroke-width="0.8"/><path d="M3.5,1.8V5.2" stroke="#404040" stroke-width="0.8"/></svg>
<svg class="ab" style="left:36.6px;top:161.7px" width="12" height="11"><rect x="1.5" y="0.5" width="9" height="1" fill="#d8e0f8"/><path d="M2.5,1.5v2.2M4,1.5v2.2M6,2.2h3.5" stroke="#8898c8" stroke-width="0.8"/><rect x="0.7" y="5" width="10.3" height="4.8" rx="1.2" fill="#686868"/><path d="M1.5,6.5h8.5M1.5,8h8.5" stroke="#8a8a8a" stroke-width="0.6"/><rect x="1" y="8.4" width="2" height="1.4" fill="#202020"/></svg>
<div class="t" style="left:50.5px;top:163.2px">401_<span style="display:inline-block;width:7.60px;font-size:8.0px;line-height:8px;vertical-align:top;font-weight:500">原</span><span style="display:inline-block;width:7.60px;font-size:8.0px;line-height:8px;vertical-align:top;font-weight:500">水</span><span style="display:inline-block;width:7.60px;font-size:8.0px;line-height:8px;vertical-align:top;font-weight:500">加</span><span style="display:inline-block;width:7.60px;font-size:8.0px;line-height:8px;vertical-align:top;font-weight:500">压</span><span style="display:inline-block;width:7.60px;font-size:8.0px;line-height:8px;vertical-align:top;font-weight:500">泵</span><span style="display:inline-block;width:7.60px;font-size:8.0px;line-height:8px;vertical-align:top;font-weight:500">站</span>50-03</div>
<svg class="ab" style="left:27.8px;top:173.3px" width="7" height="7"><rect x="0.5" y="0.5" width="6" height="6" fill="#f8f8f8" stroke="#c4c4c4"/><path d="M1.8,3.5H5.2" stroke="#404040" stroke-width="0.8"/><path d="M3.5,1.8V5.2" stroke="#404040" stroke-width="0.8"/></svg>
<svg class="ab" style="left:36.6px;top:171.8px" width="12" height="11"><rect x="1.5" y="0.5" width="9" height="1" fill="#d8e0f8"/><path d="M2.5,1.5v2.2M4,1.5v2.2M6,2.2h3.5" stroke="#8898c8" stroke-width="0.8"/><rect x="0.7" y="5" width="10.3" height="4.8" rx="1.2" fill="#686868"/><path d="M1.5,6.5h8.5M1.5,8h8.5" stroke="#8a8a8a" stroke-width="0.6"/><rect x="1" y="8.4" width="2" height="1.4" fill="#202020"/></svg>
<div class="t" style="left:50.5px;top:173.3px">405_<span style="display:inline-block;width:7.60px;font-size:8.0px;line-height:8px;vertical-align:top;font-weight:500">事</span><span style="display:inline-block;width:7.60px;font-size:8.0px;line-height:8px;vertical-align:top;font-weight:500">故</span><span style="display:inline-block;width:7.60px;font-size:8.0px;line-height:8px;vertical-align:top;font-weight:500">水</span><span style="display:inline-block;width:7.60px;font-size:8.0px;line-height:8px;vertical-align:top;font-weight:500">池</span>50-01</div>
<svg class="ab" style="left:27.8px;top:183.4px" width="7" height="7"><rect x="0.5" y="0.5" width="6" height="6" fill="#f8f8f8" stroke="#c4c4c4"/><path d="M1.8,3.5H5.2" stroke="#404040" stroke-width="0.8"/><path d="M3.5,1.8V5.2" stroke="#404040" stroke-width="0.8"/></svg>
<svg class="ab" style="left:36.6px;top:181.9px" width="12" height="11"><rect x="1.5" y="0.5" width="9" height="1" fill="#d8e0f8"/><path d="M2.5,1.5v2.2M4,1.5v2.2M6,2.2h3.5" stroke="#8898c8" stroke-width="0.8"/><rect x="0.7" y="5" width="10.3" height="4.8" rx="1.2" fill="#686868"/><path d="M1.5,6.5h8.5M1.5,8h8.5" stroke="#8a8a8a" stroke-width="0.6"/><rect x="1" y="8.4" width="2" height="1.4" fill="#202020"/></svg>
<div class="t" style="left:50.5px;top:183.4px">40_50_<span style="display:inline-block;width:7.60px;font-size:8.0px;line-height:8px;vertical-align:top;font-weight:500">公</span><span style="display:inline-block;width:7.60px;font-size:8.0px;line-height:8px;vertical-align:top;font-weight:500">用</span><span style="display:inline-block;width:7.60px;font-size:8.0px;line-height:8px;vertical-align:top;font-weight:500">工</span><span style="display:inline-block;width:7.60px;font-size:8.0px;line-height:8px;vertical-align:top;font-weight:500">程</span><span style="display:inline-block;width:7.60px;font-size:8.0px;line-height:8px;vertical-align:top;font-weight:500">空</span><span style="display:inline-block;width:7.60px;font-size:8.0px;line-height:8px;vertical-align:top;font-weight:500">分</span><span style="display:inline-block;width:7.60px;font-size:8.0px;line-height:8px;vertical-align:top;font-weight:500">部</span><span style="display:inline-block;width:7.60px;font-size:8.0px;line-height:8px;vertical-align:top;font-weight:500">分</span></div>
<svg class="ab" style="left:27.8px;top:193.5px" width="7" height="7"><rect x="0.5" y="0.5" width="6" height="6" fill="#f8f8f8" stroke="#c4c4c4"/><path d="M1.8,3.5H5.2" stroke="#404040" stroke-width="0.8"/><path d="M3.5,1.8V5.2" stroke="#404040" stroke-width="0.8"/></svg>
<svg class="ab" style="left:36.6px;top:192.0px" width="12" height="11"><rect x="1.5" y="0.5" width="9" height="1" fill="#d8e0f8"/><path d="M2.5,1.5v2.2M4,1.5v2.2M6,2.2h3.5" stroke="#8898c8" stroke-width="0.8"/><rect x="0.7" y="5" width="10.3" height="4.8" rx="1.2" fill="#686868"/><path d="M1.5,6.5h8.5M1.5,8h8.5" stroke="#8a8a8a" stroke-width="0.6"/><rect x="1" y="8.4" width="2" height="1.4" fill="#202020"/></svg>
<div class="t" style="left:50.5px;top:193.5px">41DMO<span style="display:inline-block;width:7.60px;font-size:8.0px;line-height:8px;vertical-align:top;font-weight:500">公</span><span style="display:inline-block;width:7.60px;font-size:8.0px;line-height:8px;vertical-align:top;font-weight:500">用</span><span style="display:inline-block;width:7.60px;font-size:8.0px;line-height:8px;vertical-align:top;font-weight:500">工</span><span style="display:inline-block;width:7.60px;font-size:8.0px;line-height:8px;vertical-align:top;font-weight:500">程</span></div>
<svg class="ab" style="left:27.8px;top:203.6px" width="7" height="7"><rect x="0.5" y="0.5" width="6" height="6" fill="#f8f8f8" stroke="#c4c4c4"/><path d="M1.8,3.5H5.2" stroke="#404040" stroke-width="0.8"/><path d="M3.5,1.8V5.2" stroke="#404040" stroke-width="0.8"/></svg>
<svg class="ab" style="left:36.6px;top:202.1px" width="12" height="11"><rect x="1.5" y="0.5" width="9" height="1" fill="#d8e0f8"/><path d="M2.5,1.5v2.2M4,1.5v2.2M6,2.2h3.5" stroke="#8898c8" stroke-width="0.8"/><rect x="0.7" y="5" width="10.3" height="4.8" rx="1.2" fill="#686868"/><path d="M1.5,6.5h8.5M1.5,8h8.5" stroke="#8a8a8a" stroke-width="0.6"/><rect x="1" y="8.4" width="2" height="1.4" fill="#202020"/></svg>
<div class="t" style="left:50.5px;top:203.6px">42DMO<span style="display:inline-block;width:7.60px;font-size:8.0px;line-height:8px;vertical-align:top;font-weight:500">合</span><span style="display:inline-block;width:7.60px;font-size:8.0px;line-height:8px;vertical-align:top;font-weight:500">成</span></div>
<svg class="ab" style="left:27.8px;top:213.7px" width="7" height="7"><rect x="0.5" y="0.5" width="6" height="6" fill="#f8f8f8" stroke="#c4c4c4"/><path d="M1.8,3.5H5.2" stroke="#404040" stroke-width="0.8"/><path d="M3.5,1.8V5.2" stroke="#404040" stroke-width="0.8"/></svg>
<svg class="ab" style="left:36.6px;top:212.2px" width="12" height="11"><rect x="1.5" y="0.5" width="9" height="1" fill="#d8e0f8"/><path d="M2.5,1.5v2.2M4,1.5v2.2M6,2.2h3.5" stroke="#8898c8" stroke-width="0.8"/><rect x="0.7" y="5" width="10.3" height="4.8" rx="1.2" fill="#686868"/><path d="M1.5,6.5h8.5M1.5,8h8.5" stroke="#8a8a8a" stroke-width="0.6"/><rect x="1" y="8.4" width="2" height="1.4" fill="#202020"/></svg>
<div class="t" style="left:50.5px;top:213.7px">431_<span style="display:inline-block;width:7.60px;font-size:8.0px;line-height:8px;vertical-align:top;font-weight:500">排</span><span style="display:inline-block;width:7.60px;font-size:8.0px;line-height:8px;vertical-align:top;font-weight:500">水</span><span style="display:inline-block;width:7.60px;font-size:8.0px;line-height:8px;vertical-align:top;font-weight:500">监</span><span style="display:inline-block;width:7.60px;font-size:8.0px;line-height:8px;vertical-align:top;font-weight:500">测</span><span style="display:inline-block;width:7.60px;font-size:8.0px;line-height:8px;vertical-align:top;font-weight:500">池</span>50-03</div>
<svg class="ab" style="left:27.8px;top:223.9px" width="7" height="7"><rect x="0.5" y="0.5" width="6" height="6" fill="#f8f8f8" stroke="#c4c4c4"/><path d="M1.8,3.5H5.2" stroke="#404040" stroke-width="0.8"/><path d="M3.5,1.8V5.2" stroke="#404040" stroke-width="0.8"/></svg>
<svg class="ab" style="left:36.6px;top:222.4px" width="12" height="11"><rect x="1.5" y="0.5" width="9" height="1" fill="#d8e0f8"/><path d="M2.5,1.5v2.2M4,1.5v2.2M6,2.2h3.5" stroke="#8898c8" stroke-width="0.8"/><rect x="0.7" y="5" width="10.3" height="4.8" rx="1.2" fill="#686868"/><path d="M1.5,6.5h8.5M1.5,8h8.5" stroke="#8a8a8a" stroke-width="0.6"/><rect x="1" y="8.4" width="2" height="1.4" fill="#202020"/></svg>
<div class="t" style="left:50.5px;top:223.9px">44DMO<span style="display:inline-block;width:7.60px;font-size:8.0px;line-height:8px;vertical-align:top;font-weight:500">精</span><span style="display:inline-block;width:7.60px;font-size:8.0px;line-height:8px;vertical-align:top;font-weight:500">馏</span></div>
<svg class="ab" style="left:27.8px;top:234.0px" width="7" height="7"><rect x="0.5" y="0.5" width="6" height="6" fill="#f8f8f8" stroke="#c4c4c4"/><path d="M1.8,3.5H5.2" stroke="#404040" stroke-width="0.8"/><path d="M3.5,1.8V5.2" stroke="#404040" stroke-width="0.8"/></svg>
<svg class="ab" style="left:36.6px;top:232.5px" width="12" height="11"><rect x="1.5" y="0.5" width="9" height="1" fill="#d8e0f8"/><path d="M2.5,1.5v2.2M4,1.5v2.2M6,2.2h3.5" stroke="#8898c8" stroke-width="0.8"/><rect x="0.7" y="5" width="10.3" height="4.8" rx="1.2" fill="#686868"/><path d="M1.5,6.5h8.5M1.5,8h8.5" stroke="#8a8a8a" stroke-width="0.6"/><rect x="1" y="8.4" width="2" height="1.4" fill="#202020"/></svg>
<div class="t" style="left:50.5px;top:234.0px">45DMO<span style="display:inline-block;width:7.60px;font-size:8.0px;line-height:8px;vertical-align:top;font-weight:500">尾</span><span style="display:inline-block;width:7.60px;font-size:8.0px;line-height:8px;vertical-align:top;font-weight:500">气</span><span style="display:inline-block;width:7.60px;font-size:8.0px;line-height:8px;vertical-align:top;font-weight:500">处</span><span style="display:inline-block;width:7.60px;font-size:8.0px;line-height:8px;vertical-align:top;font-weight:500">理</span></div>
<svg class="ab" style="left:27.8px;top:244.1px" width="7" height="7"><rect x="0.5" y="0.5" width="6" height="6" fill="#f8f8f8" stroke="#c4c4c4"/><path d="M1.8,3.5H5.2" stroke="#404040" stroke-width="0.8"/><path d="M3.5,1.8V5.2" stroke="#404040" stroke-width="0.8"/></svg>
<svg class="ab" style="left:36.6px;top:242.6px" width="12" height="11"><rect x="1.5" y="0.5" width="9" height="1" fill="#d8e0f8"/><path d="M2.5,1.5v2.2M4,1.5v2.2M6,2.2h3.5" stroke="#8898c8" stroke-width="0.8"/><rect x="0.7" y="5" width="10.3" height="4.8" rx="1.2" fill="#686868"/><path d="M1.5,6.5h8.5M1.5,8h8.5" stroke="#8a8a8a" stroke-width="0.6"/><rect x="1" y="8.4" width="2" height="1.4" fill="#202020"/></svg>
<div class="t" style="left:50.5px;top:244.1px">46DMO<span style="display:inline-block;width:7.60px;font-size:8.0px;line-height:8px;vertical-align:top;font-weight:500">中</span><span style="display:inline-block;width:7.60px;font-size:8.0px;line-height:8px;vertical-align:top;font-weight:500">间</span><span style="display:inline-block;width:7.60px;font-size:8.0px;line-height:8px;vertical-align:top;font-weight:500">罐</span><span style="display:inline-block;width:7.60px;font-size:8.0px;line-height:8px;vertical-align:top;font-weight:500">区</span></div>
<svg class="ab" style="left:27.8px;top:254.2px" width="7" height="7"><rect x="0.5" y="0.5" width="6" height="6" fill="#f8f8f8" stroke="#c4c4c4"/><path d="M1.8,3.5H5.2" stroke="#404040" stroke-width="0.8"/><path d="M3.5,1.8V5.2" stroke="#404040" stroke-width="0.8"/></svg>
<svg class="ab" style="left:36.6px;top:252.7px" width="12" height="11"><rect x="1.5" y="0.5" width="9" height="1" fill="#d8e0f8"/><path d="M2.5,1.5v2.2M4,1.5v2.2M6,2.2h3.5" stroke="#8898c8" stroke-width="0.8"/><rect x="0.7" y="5" width="10.3" height="4.8" rx="1.2" fill="#686868"/><path d="M1.5,6.5h8.5M1.5,8h8.5" stroke="#8a8a8a" stroke-width="0.6"/><rect x="1" y="8.4" width="2" height="1.4" fill="#202020"/></svg>
<div class="t" style="left:50.5px;top:254.2px">47DMO<span style="display:inline-block;width:7.60px;font-size:8.0px;line-height:8px;vertical-align:top;font-weight:500">废</span><span style="display:inline-block;width:7.60px;font-size:8.0px;line-height:8px;vertical-align:top;font-weight:500">水</span><span style="display:inline-block;width:7.60px;font-size:8.0px;line-height:8px;vertical-align:top;font-weight:500">处</span><span style="display:inline-block;width:7.60px;font-size:8.0px;line-height:8px;vertical-align:top;font-weight:500">理</span></div>
<svg class="ab" style="left:27.8px;top:264.3px" width="7" height="7"><rect x="0.5" y="0.5" width="6" height="6" fill="#f8f8f8" stroke="#c4c4c4"/><path d="M1.8,3.5H5.2" stroke="#404040" stroke-width="0.8"/><path d="M3.5,1.8V5.2" stroke="#404040" stroke-width="0.8"/></svg>
<svg class="ab" style="left:36.6px;top:262.8px" width="12" height="11"><rect x="1.5" y="0.5" width="9" height="1" fill="#d8e0f8"/><path d="M2.5,1.5v2.2M4,1.5v2.2M6,2.2h3.5" stroke="#8898c8" stroke-width="0.8"/><rect x="0.7" y="5" width="10.3" height="4.8" rx="1.2" fill="#686868"/><path d="M1.5,6.5h8.5M1.5,8h8.5" stroke="#8a8a8a" stroke-width="0.6"/><rect x="1" y="8.4" width="2" height="1.4" fill="#202020"/></svg>
<div class="t" style="left:50.5px;top:264.3px">48<span style="display:inline-block;width:7.60px;font-size:8.0px;line-height:8px;vertical-align:top;font-weight:500">小</span><span style="display:inline-block;width:7.60px;font-size:8.0px;line-height:8px;vertical-align:top;font-weight:500">冰</span><span style="display:inline-block;width:7.60px;font-size:8.0px;line-height:8px;vertical-align:top;font-weight:500">机</span></div>
<svg class="ab" style="left:27.8px;top:274.4px" width="7" height="7"><rect x="0.5" y="0.5" width="6" height="6" fill="#f8f8f8" stroke="#c4c4c4"/><path d="M1.8,3.5H5.2" stroke="#404040" stroke-width="0.8"/><path d="M3.5,1.8V5.2" stroke="#404040" stroke-width="0.8"/></svg>
<svg class="ab" style="left:36.6px;top:272.9px" width="12" height="11"><rect x="1.5" y="0.5" width="9" height="1" fill="#d8e0f8"/><path d="M2.5,1.5v2.2M4,1.5v2.2M6,2.2h3.5" stroke="#8898c8" stroke-width="0.8"/><rect x="0.7" y="5" width="10.3" height="4.8" rx="1.2" fill="#686868"/><path d="M1.5,6.5h8.5M1.5,8h8.5" stroke="#8a8a8a" stroke-width="0.6"/><rect x="1" y="8.4" width="2" height="1.4" fill="#202020"/></svg>
<div class="t" style="left:50.5px;top:274.4px">51<span style="display:inline-block;width:7.60px;font-size:8.0px;line-height:8px;vertical-align:top;font-weight:500">乙</span><span style="display:inline-block;width:7.60px;font-size:8.0px;line-height:8px;vertical-align:top;font-weight:500">二</span><span style="display:inline-block;width:7.60px;font-size:8.0px;line-height:8px;vertical-align:top;font-weight:500">醇</span><span style="display:inline-block;width:7.60px;font-size:8.0px;line-height:8px;vertical-align:top;font-weight:500">合</span><span style="display:inline-block;width:7.60px;font-size:8.0px;line-height:8px;vertical-align:top;font-weight:500">成</span></div>
<svg class="ab" style="left:27.8px;top:284.5px" width="7" height="7"><rect x="0.5" y="0.5" width="6" height="6" fill="#f8f8f8" stroke="#c4c4c4"/><path d="M1.8,3.5H5.2" stroke="#404040" stroke-width="0.8"/><path d="M3.5,1.8V5.2" stroke="#404040" stroke-width="0.8"/></svg>
<svg class="ab" style="left:36.6px;top:283.0px" width="12" height="11"><rect x="1.5" y="0.5" width="9" height="1" fill="#d8e0f8"/><path d="M2.5,1.5v2.2M4,1.5v2.2M6,2.2h3.5" stroke="#8898c8" stroke-width="0.8"/><rect x="0.7" y="5" width="10.3" height="4.8" rx="1.2" fill="#686868"/><path d="M1.5,6.5h8.5M1.5,8h8.5" stroke="#8a8a8a" stroke-width="0.6"/><rect x="1" y="8.4" width="2" height="1.4" fill="#202020"/></svg>
<div class="t" style="left:50.5px;top:284.5px">53<span style="display:inline-block;width:7.60px;font-size:8.0px;line-height:8px;vertical-align:top;font-weight:500">乙</span><span style="display:inline-block;width:7.60px;font-size:8.0px;line-height:8px;vertical-align:top;font-weight:500">二</span><span style="display:inline-block;width:7.60px;font-size:8.0px;line-height:8px;vertical-align:top;font-weight:500">醇</span><span style="display:inline-block;width:7.60px;font-size:8.0px;line-height:8px;vertical-align:top;font-weight:500">精</span><span style="display:inline-block;width:7.60px;font-size:8.0px;line-height:8px;vertical-align:top;font-weight:500">馏</span></div>
<svg class="ab" style="left:27.8px;top:294.6px" width="7" height="7"><rect x="0.5" y="0.5" width="6" height="6" fill="#f8f8f8" stroke="#c4c4c4"/><path d="M1.8,3.5H5.2" stroke="#404040" stroke-width="0.8"/><path d="M3.5,1.8V5.2" stroke="#404040" stroke-width="0.8"/></svg>
<svg class="ab" style="left:36.6px;top:293.1px" width="12" height="11"><rect x="1.5" y="0.5" width="9" height="1" fill="#d8e0f8"/><path d="M2.5,1.5v2.2M4,1.5v2.2M6,2.2h3.5" stroke="#8898c8" stroke-width="0.8"/><rect x="0.7" y="5" width="10.3" height="4.8" rx="1.2" fill="#686868"/><path d="M1.5,6.5h8.5M1.5,8h8.5" stroke="#8a8a8a" stroke-width="0.6"/><rect x="1" y="8.4" width="2" height="1.4" fill="#202020"/></svg>
<div class="t" style="left:50.5px;top:294.6px">53<span style="display:inline-block;width:7.60px;font-size:8.0px;line-height:8px;vertical-align:top;font-weight:500">技</span><span style="display:inline-block;width:7.60px;font-size:8.0px;line-height:8px;vertical-align:top;font-weight:500">改</span><span style="display:inline-block;width:7.60px;font-size:8.0px;line-height:8px;vertical-align:top;font-weight:500">项</span><span style="display:inline-block;width:7.60px;font-size:8.0px;line-height:8px;vertical-align:top;font-weight:500">目</span></div>
<svg class="ab" style="left:27.8px;top:304.7px" width="7" height="7"><rect x="0.5" y="0.5" width="6" height="6" fill="#f8f8f8" stroke="#c4c4c4"/><path d="M1.8,3.5H5.2" stroke="#404040" stroke-width="0.8"/><path d="M3.5,1.8V5.2" stroke="#404040" stroke-width="0.8"/></svg>
<svg class="ab" style="left:36.6px;top:303.2px" width="12" height="11"><rect x="1.5" y="0.5" width="9" height="1" fill="#d8e0f8"/><path d="M2.5,1.5v2.2M4,1.5v2.2M6,2.2h3.5" stroke="#8898c8" stroke-width="0.8"/><rect x="0.7" y="5" width="10.3" height="4.8" rx="1.2" fill="#686868"/><path d="M1.5,6.5h8.5M1.5,8h8.5" stroke="#8a8a8a" stroke-width="0.6"/><rect x="1" y="8.4" width="2" height="1.4" fill="#202020"/></svg>
<div class="t" style="left:50.5px;top:304.7px">54<span style="display:inline-block;width:7.60px;font-size:8.0px;line-height:8px;vertical-align:top;font-weight:500">乙</span><span style="display:inline-block;width:7.60px;font-size:8.0px;line-height:8px;vertical-align:top;font-weight:500">二</span><span style="display:inline-block;width:7.60px;font-size:8.0px;line-height:8px;vertical-align:top;font-weight:500">醇</span><span style="display:inline-block;width:7.60px;font-size:8.0px;line-height:8px;vertical-align:top;font-weight:500">脱</span><span style="display:inline-block;width:7.60px;font-size:8.0px;line-height:8px;vertical-align:top;font-weight:500">醛</span></div>
<svg class="ab" style="left:27.8px;top:314.8px" width="7" height="7"><rect x="0.5" y="0.5" width="6" height="6" fill="#f8f8f8" stroke="#c4c4c4"/><path d="M1.8,3.5H5.2" stroke="#404040" stroke-width="0.8"/><path d="M3.5,1.8V5.2" stroke="#404040" stroke-width="0.8"/></svg>
<svg class="ab" style="left:36.6px;top:313.3px" width="12" height="11"><rect x="1.5" y="0.5" width="9" height="1" fill="#d8e0f8"/><path d="M2.5,1.5v2.2M4,1.5v2.2M6,2.2h3.5" stroke="#8898c8" stroke-width="0.8"/><rect x="0.7" y="5" width="10.3" height="4.8" rx="1.2" fill="#686868"/><path d="M1.5,6.5h8.5M1.5,8h8.5" stroke="#8a8a8a" stroke-width="0.6"/><rect x="1" y="8.4" width="2" height="1.4" fill="#202020"/></svg>
<div class="t" style="left:50.5px;top:314.8px">60<span style="display:inline-block;width:7.60px;font-size:8.0px;line-height:8px;vertical-align:top;font-weight:500">成</span><span style="display:inline-block;width:7.60px;font-size:8.0px;line-height:8px;vertical-align:top;font-weight:500">品</span><span style="display:inline-block;width:7.60px;font-size:8.0px;line-height:8px;vertical-align:top;font-weight:500">罐</span><span style="display:inline-block;width:7.60px;font-size:8.0px;line-height:8px;vertical-align:top;font-weight:500">区</span></div>
<svg class="ab" style="left:27.8px;top:324.9px" width="7" height="7"><rect x="0.5" y="0.5" width="6" height="6" fill="#f8f8f8" stroke="#c4c4c4"/><path d="M1.8,3.5H5.2" stroke="#404040" stroke-width="0.8"/><path d="M3.5,1.8V5.2" stroke="#404040" stroke-width="0.8"/></svg>
<svg class="ab" style="left:36.6px;top:323.4px" width="12" height="11"><rect x="1.5" y="0.5" width="9" height="1" fill="#d8e0f8"/><path d="M2.5,1.5v2.2M4,1.5v2.2M6,2.2h3.5" stroke="#8898c8" stroke-width="0.8"/><rect x="0.7" y="5" width="10.3" height="4.8" rx="1.2" fill="#686868"/><path d="M1.5,6.5h8.5M1.5,8h8.5" stroke="#8a8a8a" stroke-width="0.6"/><rect x="1" y="8.4" width="2" height="1.4" fill="#202020"/></svg>
<div class="t" style="left:50.5px;top:324.9px">61<span style="display:inline-block;width:7.60px;font-size:8.0px;line-height:8px;vertical-align:top;font-weight:500">中</span><span style="display:inline-block;width:7.60px;font-size:8.0px;line-height:8px;vertical-align:top;font-weight:500">间</span><span style="display:inline-block;width:7.60px;font-size:8.0px;line-height:8px;vertical-align:top;font-weight:500">罐</span><span style="display:inline-block;width:7.60px;font-size:8.0px;line-height:8px;vertical-align:top;font-weight:500">区</span></div>
<svg class="ab" style="left:27.8px;top:335.0px" width="7" height="7"><rect x="0.5" y="0.5" width="6" height="6" fill="#f8f8f8" stroke="#c4c4c4"/><path d="M1.8,3.5H5.2" stroke="#404040" stroke-width="0.8"/><path d="M3.5,1.8V5.2" stroke="#404040" stroke-width="0.8"/></svg>
<svg class="ab" style="left:36.6px;top:333.5px" width="12" height="11"><rect x="1.5" y="0.5" width="9" height="1" fill="#d8e0f8"/><path d="M2.5,1.5v2.2M4,1.5v2.2M6,2.2h3.5" stroke="#8898c8" stroke-width="0.8"/><rect x="0.7" y="5" width="10.3" height="4.8" rx="1.2" fill="#686868"/><path d="M1.5,6.5h8.5M1.5,8h8.5" stroke="#8a8a8a" stroke-width="0.6"/><rect x="1" y="8.4" width="2" height="1.4" fill="#202020"/></svg>
<div class="t" style="left:50.5px;top:335.0px">63<span style="display:inline-block;width:7.60px;font-size:8.0px;line-height:8px;vertical-align:top;font-weight:500">氯</span><span style="display:inline-block;width:7.60px;font-size:8.0px;line-height:8px;vertical-align:top;font-weight:500">罐</span><span style="display:inline-block;width:7.60px;font-size:8.0px;line-height:8px;vertical-align:top;font-weight:500">区</span><span style="display:inline-block;width:7.60px;font-size:8.0px;line-height:8px;vertical-align:top;font-weight:500">单</span><span style="display:inline-block;width:7.60px;font-size:8.0px;line-height:8px;vertical-align:top;font-weight:500">元</span></div>
<svg class="ab" style="left:27.8px;top:345.1px" width="7" height="7"><rect x="0.5" y="0.5" width="6" height="6" fill="#f8f8f8" stroke="#c4c4c4"/><path d="M1.8,3.5H5.2" stroke="#404040" stroke-width="0.8"/><path d="M3.5,1.8V5.2" stroke="#404040" stroke-width="0.8"/></svg>
<svg class="ab" style="left:36.6px;top:343.6px" width="12" height="11"><rect x="1.5" y="0.5" width="9" height="1" fill="#d8e0f8"/><path d="M2.5,1.5v2.2M4,1.5v2.2M6,2.2h3.5" stroke="#8898c8" stroke-width="0.8"/><rect x="0.7" y="5" width="10.3" height="4.8" rx="1.2" fill="#686868"/><path d="M1.5,6.5h8.5M1.5,8h8.5" stroke="#8a8a8a" stroke-width="0.6"/><rect x="1" y="8.4" width="2" height="1.4" fill="#202020"/></svg>
<div class="t" style="left:50.5px;top:345.1px">70_<span style="display:inline-block;width:7.60px;font-size:8.0px;line-height:8px;vertical-align:top;font-weight:500">空</span><span style="display:inline-block;width:7.60px;font-size:8.0px;line-height:8px;vertical-align:top;font-weight:500">分</span><span style="display:inline-block;width:7.60px;font-size:8.0px;line-height:8px;vertical-align:top;font-weight:500">装</span><span style="display:inline-block;width:7.60px;font-size:8.0px;line-height:8px;vertical-align:top;font-weight:500">置</span></div>
<svg class="ab" style="left:27.8px;top:355.2px" width="7" height="7"><rect x="0.5" y="0.5" width="6" height="6" fill="#f8f8f8" stroke="#c4c4c4"/><path d="M1.8,3.5H5.2" stroke="#404040" stroke-width="0.8"/><path d="M3.5,1.8V5.2" stroke="#404040" stroke-width="0.8"/></svg>
<svg class="ab" style="left:36.6px;top:353.7px" width="12" height="11"><rect x="1.5" y="0.5" width="9" height="1" fill="#d8e0f8"/><path d="M2.5,1.5v2.2M4,1.5v2.2M6,2.2h3.5" stroke="#8898c8" stroke-width="0.8"/><rect x="0.7" y="5" width="10.3" height="4.8" rx="1.2" fill="#686868"/><path d="M1.5,6.5h8.5M1.5,8h8.5" stroke="#8a8a8a" stroke-width="0.6"/><rect x="1" y="8.4" width="2" height="1.4" fill="#202020"/></svg>
<div class="t" style="left:50.5px;top:355.2px">800_<span style="display:inline-block;width:7.60px;font-size:8.0px;line-height:8px;vertical-align:top;font-weight:500">火</span><span style="display:inline-block;width:7.60px;font-size:8.0px;line-height:8px;vertical-align:top;font-weight:500">炬</span></div>
<svg class="ab" style="left:27.8px;top:365.4px" width="7" height="7"><rect x="0.5" y="0.5" width="6" height="6" fill="#f8f8f8" stroke="#c4c4c4"/><path d="M1.8,3.5H5.2" stroke="#404040" stroke-width="0.8"/><path d="M3.5,1.8V5.2" stroke="#404040" stroke-width="0.8"/></svg>
<svg class="ab" style="left:36.6px;top:363.9px" width="12" height="11"><rect x="1.5" y="0.5" width="9" height="1" fill="#d8e0f8"/><path d="M2.5,1.5v2.2M4,1.5v2.2M6,2.2h3.5" stroke="#8898c8" stroke-width="0.8"/><rect x="0.7" y="5" width="10.3" height="4.8" rx="1.2" fill="#686868"/><path d="M1.5,6.5h8.5M1.5,8h8.5" stroke="#8a8a8a" stroke-width="0.6"/><rect x="1" y="8.4" width="2" height="1.4" fill="#202020"/></svg>
<div class="t" style="left:50.5px;top:365.4px">AREA_A</div>
<svg class="ab" style="left:27.8px;top:375.5px" width="7" height="7"><rect x="0.5" y="0.5" width="6" height="6" fill="#f8f8f8" stroke="#c4c4c4"/><path d="M1.8,3.5H5.2" stroke="#404040" stroke-width="0.8"/><path d="M3.5,1.8V5.2" stroke="#404040" stroke-width="0.8"/></svg>
<svg class="ab" style="left:36.6px;top:374.0px" width="12" height="11"><rect x="1.5" y="0.5" width="9" height="1" fill="#d8e0f8"/><path d="M2.5,1.5v2.2M4,1.5v2.2M6,2.2h3.5" stroke="#8898c8" stroke-width="0.8"/><rect x="0.7" y="5" width="10.3" height="4.8" rx="1.2" fill="#686868"/><path d="M1.5,6.5h8.5M1.5,8h8.5" stroke="#8a8a8a" stroke-width="0.6"/><rect x="1" y="8.4" width="2" height="1.4" fill="#202020"/></svg>
<div class="t" style="left:50.5px;top:375.5px">COM150B</div>
<svg class="ab" style="left:27.8px;top:385.6px" width="7" height="7"><rect x="0.5" y="0.5" width="6" height="6" fill="#f8f8f8" stroke="#c4c4c4"/><path d="M1.8,3.5H5.2" stroke="#404040" stroke-width="0.8"/><path d="M3.5,1.8V5.2" stroke="#404040" stroke-width="0.8"/></svg>
<svg class="ab" style="left:36.6px;top:384.1px" width="12" height="11"><rect x="1.5" y="0.5" width="9" height="1" fill="#d8e0f8"/><path d="M2.5,1.5v2.2M4,1.5v2.2M6,2.2h3.5" stroke="#8898c8" stroke-width="0.8"/><rect x="0.7" y="5" width="10.3" height="4.8" rx="1.2" fill="#686868"/><path d="M1.5,6.5h8.5M1.5,8h8.5" stroke="#8a8a8a" stroke-width="0.6"/><rect x="1" y="8.4" width="2" height="1.4" fill="#202020"/></svg>
<div class="t" style="left:50.5px;top:385.6px">DMO<span style="display:inline-block;width:7.60px;font-size:8.0px;line-height:8px;vertical-align:top;font-weight:500">装</span><span style="display:inline-block;width:7.60px;font-size:8.0px;line-height:8px;vertical-align:top;font-weight:500">置</span><span style="display:inline-block;width:7.60px;font-size:8.0px;line-height:8px;vertical-align:top;font-weight:500">废</span><span style="display:inline-block;width:7.60px;font-size:8.0px;line-height:8px;vertical-align:top;font-weight:500">水</span><span style="display:inline-block;width:7.60px;font-size:8.0px;line-height:8px;vertical-align:top;font-weight:500">技</span><span style="display:inline-block;width:7.60px;font-size:8.0px;line-height:8px;vertical-align:top;font-weight:500">术</span><span style="display:inline-block;width:7.60px;font-size:8.0px;line-height:8px;vertical-align:top;font-weight:500">改</span><span style="display:inline-block;width:7.60px;font-size:8.0px;line-height:8px;vertical-align:top;font-weight:500">造</span></div>
<svg class="ab" style="left:27.8px;top:395.7px" width="7" height="7"><rect x="0.5" y="0.5" width="6" height="6" fill="#f8f8f8" stroke="#c4c4c4"/><path d="M1.8,3.5H5.2" stroke="#404040" stroke-width="0.8"/></svg>
<svg class="ab" style="left:36.6px;top:394.2px" width="12" height="11"><rect x="1.5" y="0.5" width="9" height="1" fill="#d8e0f8"/><path d="M2.5,1.5v2.2M4,1.5v2.2M6,2.2h3.5" stroke="#8898c8" stroke-width="0.8"/><rect x="0.7" y="5" width="10.3" height="4.8" rx="1.2" fill="#686868"/><path d="M1.5,6.5h8.5M1.5,8h8.5" stroke="#8a8a8a" stroke-width="0.6"/><rect x="1" y="8.4" width="2" height="1.4" fill="#202020"/></svg>
<div class="t" style="left:50.5px;top:395.7px"><span style="display:inline-block;width:7.60px;font-size:8.0px;line-height:8px;vertical-align:top;font-weight:500">成</span><span style="display:inline-block;width:7.60px;font-size:8.0px;line-height:8px;vertical-align:top;font-weight:500">本</span><span style="display:inline-block;width:7.60px;font-size:8.0px;line-height:8px;vertical-align:top;font-weight:500">核</span><span style="display:inline-block;width:7.60px;font-size:8.0px;line-height:8px;vertical-align:top;font-weight:500">算</span></div>
<svg class="ab" style="left:38.8px;top:405.8px" width="7" height="7"><rect x="0.5" y="0.5" width="6" height="6" fill="#f8f8f8" stroke="#c4c4c4"/><path d="M1.8,3.5H5.2" stroke="#404040" stroke-width="0.8"/><path d="M3.5,1.8V5.2" stroke="#404040" stroke-width="0.8"/></svg>
<svg class="ab" style="left:48.5px;top:404.3px" width="12" height="10"><circle cx="2.5" cy="3" r="2.2" fill="#c04080"/><circle cx="9.5" cy="3" r="2.2" fill="#3050c0"/><circle cx="6" cy="7.5" r="2.3" fill="#30c040"/><path d="M3,4L6,7L9,4" stroke="#60a060" stroke-width="0.8" fill="none"/></svg>
<div class="t" style="left:62.4px;top:405.8px"><span style="display:inline-block;width:7.60px;font-size:8.0px;line-height:8px;vertical-align:top;font-weight:500">乙</span><span style="display:inline-block;width:7.60px;font-size:8.0px;line-height:8px;vertical-align:top;font-weight:500">二</span><span style="display:inline-block;width:7.60px;font-size:8.0px;line-height:8px;vertical-align:top;font-weight:500">醇</span></div>
<svg class="ab" style="left:38.8px;top:415.9px" width="7" height="7"><rect x="0.5" y="0.5" width="6" height="6" fill="#f8f8f8" stroke="#c4c4c4"/><path d="M1.8,3.5H5.2" stroke="#404040" stroke-width="0.8"/><path d="M3.5,1.8V5.2" stroke="#404040" stroke-width="0.8"/></svg>
<svg class="ab" style="left:48.5px;top:414.4px" width="12" height="10"><circle cx="2.5" cy="3" r="2.2" fill="#c04080"/><circle cx="9.5" cy="3" r="2.2" fill="#3050c0"/><circle cx="6" cy="7.5" r="2.3" fill="#30c040"/><path d="M3,4L6,7L9,4" stroke="#60a060" stroke-width="0.8" fill="none"/></svg>
<div class="t" style="left:62.4px;top:415.9px"><span style="display:inline-block;width:7.60px;font-size:8.0px;line-height:8px;vertical-align:top;font-weight:500">净</span><span style="display:inline-block;width:7.60px;font-size:8.0px;line-height:8px;vertical-align:top;font-weight:500">化</span><span style="display:inline-block;width:7.60px;font-size:8.0px;line-height:8px;vertical-align:top;font-weight:500">产</span><span style="display:inline-block;width:7.60px;font-size:8.0px;line-height:8px;vertical-align:top;font-weight:500">品</span>H2-CO<span style="display:inline-block;width:7.60px;font-size:8.0px;line-height:8px;vertical-align:top;font-weight:500">气</span><span style="display:inline-block;width:7.60px;font-size:8.0px;line-height:8px;vertical-align:top;font-weight:500">生</span><span style="display:inline-block;width:7.60px;font-size:8.0px;line-height:8px;vertical-align:top;font-weight:500">产</span></div>
<svg class="ab" style="left:38.8px;top:426.0px" width="7" height="7"><rect x="0.5" y="0.5" width="6" height="6" fill="#f8f8f8" stroke="#c4c4c4"/><path d="M1.8,3.5H5.2" stroke="#404040" stroke-width="0.8"/><path d="M3.5,1.8V5.2" stroke="#404040" stroke-width="0.8"/></svg>
<svg class="ab" style="left:48.5px;top:424.5px" width="12" height="10"><circle cx="2.5" cy="3" r="2.2" fill="#c04080"/><circle cx="9.5" cy="3" r="2.2" fill="#3050c0"/><circle cx="6" cy="7.5" r="2.3" fill="#30c040"/><path d="M3,4L6,7L9,4" stroke="#60a060" stroke-width="0.8" fill="none"/></svg>
<div class="t" style="left:62.4px;top:426.0px"><span style="display:inline-block;width:7.60px;font-size:8.0px;line-height:8px;vertical-align:top;font-weight:500">净</span><span style="display:inline-block;width:7.60px;font-size:8.0px;line-height:8px;vertical-align:top;font-weight:500">化</span><span style="display:inline-block;width:7.60px;font-size:8.0px;line-height:8px;vertical-align:top;font-weight:500">气</span><span style="display:inline-block;width:7.60px;font-size:8.0px;line-height:8px;vertical-align:top;font-weight:500">生</span><span style="display:inline-block;width:7.60px;font-size:8.0px;line-height:8px;vertical-align:top;font-weight:500">产</span><span style="display:inline-block;width:7.60px;font-size:8.0px;line-height:8px;vertical-align:top;font-weight:500">成</span><span style="display:inline-block;width:7.60px;font-size:8.0px;line-height:8px;vertical-align:top;font-weight:500">本</span></div>
<svg class="ab" style="left:38.8px;top:436.1px" width="7" height="7"><rect x="0.5" y="0.5" width="6" height="6" fill="#f8f8f8" stroke="#c4c4c4"/><path d="M1.8,3.5H5.2" stroke="#404040" stroke-width="0.8"/><path d="M3.5,1.8V5.2" stroke="#404040" stroke-width="0.8"/></svg>
<svg class="ab" style="left:48.5px;top:434.6px" width="12" height="10"><circle cx="2.5" cy="3" r="2.2" fill="#c04080"/><circle cx="9.5" cy="3" r="2.2" fill="#3050c0"/><circle cx="6" cy="7.5" r="2.3" fill="#30c040"/><path d="M3,4L6,7L9,4" stroke="#60a060" stroke-width="0.8" fill="none"/></svg>
<div class="t" style="left:62.4px;top:436.1px"><span style="display:inline-block;width:7.60px;font-size:8.0px;line-height:8px;vertical-align:top;font-weight:500">空</span><span style="display:inline-block;width:7.60px;font-size:8.0px;line-height:8px;vertical-align:top;font-weight:500">分</span><span style="display:inline-block;width:7.60px;font-size:8.0px;line-height:8px;vertical-align:top;font-weight:500">厂</span><span style="display:inline-block;width:7.60px;font-size:8.0px;line-height:8px;vertical-align:top;font-weight:500">锅</span><span style="display:inline-block;width:7.60px;font-size:8.0px;line-height:8px;vertical-align:top;font-weight:500">炉</span><span style="display:inline-block;width:7.60px;font-size:8.0px;line-height:8px;vertical-align:top;font-weight:500">给</span><span style="display:inline-block;width:7.60px;font-size:8.0px;line-height:8px;vertical-align:top;font-weight:500">水</span></div>
<svg class="ab" style="left:38.8px;top:446.2px" width="7" height="7"><rect x="0.5" y="0.5" width="6" height="6" fill="#f8f8f8" stroke="#c4c4c4"/><path d="M1.8,3.5H5.2" stroke="#404040" stroke-width="0.8"/><path d="M3.5,1.8V5.2" stroke="#404040" stroke-width="0.8"/></svg>
<svg class="ab" style="left:48.5px;top:444.7px" width="12" height="10"><circle cx="2.5" cy="3" r="2.2" fill="#c04080"/><circle cx="9.5" cy="3" r="2.2" fill="#3050c0"/><circle cx="6" cy="7.5" r="2.3" fill="#30c040"/><path d="M3,4L6,7L9,4" stroke="#60a060" stroke-width="0.8" fill="none"/></svg>
<div class="t" style="left:62.4px;top:446.2px"><span style="display:inline-block;width:7.60px;font-size:8.0px;line-height:8px;vertical-align:top;font-weight:500">空</span><span style="display:inline-block;width:7.60px;font-size:8.0px;line-height:8px;vertical-align:top;font-weight:500">分</span><span style="display:inline-block;width:7.60px;font-size:8.0px;line-height:8px;vertical-align:top;font-weight:500">氧</span><span style="display:inline-block;width:7.60px;font-size:8.0px;line-height:8px;vertical-align:top;font-weight:500">氮</span></div>
<svg class="ab" style="left:38.8px;top:456.3px" width="7" height="7"><rect x="0.5" y="0.5" width="6" height="6" fill="#f8f8f8" stroke="#c4c4c4"/><path d="M1.8,3.5H5.2" stroke="#404040" stroke-width="0.8"/><path d="M3.5,1.8V5.2" stroke="#404040" stroke-width="0.8"/></svg>
<svg class="ab" style="left:48.5px;top:454.8px" width="12" height="10"><circle cx="6" cy="3" r="2.6" fill="#20b020"/><circle cx="3.3" cy="7" r="2.6" fill="#e01818"/><circle cx="8.7" cy="7" r="2.6" fill="#2030d0"/></svg>
<div class="t" style="left:62.4px;top:456.3px">JG</div>
<svg class="ab" style="left:38.8px;top:466.4px" width="7" height="7"><rect x="0.5" y="0.5" width="6" height="6" fill="#f8f8f8" stroke="#c4c4c4"/><path d="M1.8,3.5H5.2" stroke="#404040" stroke-width="0.8"/><path d="M3.5,1.8V5.2" stroke="#404040" stroke-width="0.8"/></svg>
<svg class="ab" style="left:48.5px;top:464.9px" width="12" height="10"><circle cx="6" cy="3" r="2.6" fill="#20b020"/><circle cx="3.3" cy="7" r="2.6" fill="#e01818"/><circle cx="8.7" cy="7" r="2.6" fill="#2030d0"/></svg>
<div class="ab" style="left:60.9px;top:465.4px;width:23px;height:9px;background:#d4d0c8"></div>
<div class="t" style="left:62.4px;top:466.4px">PI-001</div>
<svg class="ab" style="left:27.8px;top:476.5px" width="7" height="7"><rect x="0.5" y="0.5" width="6" height="6" fill="#f8f8f8" stroke="#c4c4c4"/><path d="M1.8,3.5H5.2" stroke="#404040" stroke-width="0.8"/><path d="M3.5,1.8V5.2" stroke="#404040" stroke-width="0.8"/></svg>
<svg class="ab" style="left:36.6px;top:475.0px" width="12" height="11"><rect x="1.5" y="0.5" width="9" height="1" fill="#d8e0f8"/><path d="M2.5,1.5v2.2M4,1.5v2.2M6,2.2h3.5" stroke="#8898c8" stroke-width="0.8"/><rect x="0.7" y="5" width="10.3" height="4.8" rx="1.2" fill="#686868"/><path d="M1.5,6.5h8.5M1.5,8h8.5" stroke="#8a8a8a" stroke-width="0.6"/><rect x="1" y="8.4" width="2" height="1.4" fill="#202020"/></svg>
<div class="t" style="left:50.5px;top:476.5px"><span style="display:inline-block;width:7.60px;font-size:8.0px;line-height:8px;vertical-align:top;font-weight:500">机</span><span style="display:inline-block;width:7.60px;font-size:8.0px;line-height:8px;vertical-align:top;font-weight:500">组</span></div>
<svg class="ab" style="left:27.8px;top:486.6px" width="7" height="7"><rect x="0.5" y="0.5" width="6" height="6" fill="#f8f8f8" stroke="#c4c4c4"/><path d="M1.8,3.5H5.2" stroke="#404040" stroke-width="0.8"/><path d="M3.5,1.8V5.2" stroke="#404040" stroke-width="0.8"/></svg>
<svg class="ab" style="left:36.6px;top:485.1px" width="12" height="11"><rect x="1.5" y="0.5" width="9" height="1" fill="#d8e0f8"/><path d="M2.5,1.5v2.2M4,1.5v2.2M6,2.2h3.5" stroke="#8898c8" stroke-width="0.8"/><rect x="0.7" y="5" width="10.3" height="4.8" rx="1.2" fill="#686868"/><path d="M1.5,6.5h8.5M1.5,8h8.5" stroke="#8a8a8a" stroke-width="0.6"/><rect x="1" y="8.4" width="2" height="1.4" fill="#202020"/></svg>
<div class="t" style="left:50.5px;top:486.6px"><span style="display:inline-block;width:7.60px;font-size:8.0px;line-height:8px;vertical-align:top;font-weight:500">通</span><span style="display:inline-block;width:7.60px;font-size:8.0px;line-height:8px;vertical-align:top;font-weight:500">讯</span><span style="display:inline-block;width:7.60px;font-size:8.0px;line-height:8px;vertical-align:top;font-weight:500">点</span></div>
<svg class="ab" style="left:15.8px;top:496.7px" width="7" height="7"><rect x="0.5" y="0.5" width="6" height="6" fill="#f8f8f8" stroke="#c4c4c4"/><path d="M1.8,3.5H5.2" stroke="#404040" stroke-width="0.8"/></svg>
<svg class="ab" style="left:25.0px;top:495.2px" width="18" height="10"><polygon points="3.8,0.8 7.6,8.2 0,8.2" fill="#1018c0"/><circle cx="3.8" cy="4.6" r="1.3" fill="#e8e050"/><path d="M1.5,6.5h4.6" stroke="#f0f0a0" stroke-width="0.6"/><rect x="8.5" y="0.5" width="5" height="4" fill="#90b0e0" stroke="#506090" stroke-width="0.6"/><rect x="12" y="4" width="6" height="4.5" fill="#80a0d8" stroke="#506090" stroke-width="0.6"/><rect x="8" y="6" width="4" height="3" fill="#a0c0e8"/></svg>
<div class="t" style="left:45.5px;top:496.7px">Physical Network</div>
<svg class="ab" style="left:38.0px;top:505.3px" width="10" height="10"><rect x="1" y="0" width="7" height="10" fill="#404020"/><rect x="2" y="1" width="5" height="2" fill="#a0a060"/></svg>
<div class="t" style="left:50.0px;top:506.8px">Decommissioned Nodes</div>
<svg class="ab" style="left:27.8px;top:517.0px" width="7" height="7"><rect x="0.5" y="0.5" width="6" height="6" fill="#f8f8f8" stroke="#c4c4c4"/><path d="M1.8,3.5H5.2" stroke="#404040" stroke-width="0.8"/></svg>
<svg class="ab" style="left:36.6px;top:515.5px" width="19" height="10"><polygon points="3.8,0.8 7.6,8.2 0,8.2" fill="#1018c0"/><circle cx="3.8" cy="4.6" r="1.3" fill="#e8e050"/><path d="M1.5,6.5h4.6" stroke="#f0f0a0" stroke-width="0.6"/><rect x="10.5" y="0.5" width="7.5" height="9" fill="#e8f6ff" stroke="#40a0e0" stroke-width="0.9" stroke-dasharray="1.2,0.8"/><rect x="12.5" y="2.5" width="3.5" height="5" fill="#90c8f0"/><path d="M8,4.5h2.5" stroke="#303030" stroke-width="0.8"/><rect x="10" y="1" width="1" height="8" fill="#303030"/></svg>
<div class="t" style="left:57.6px;top:517.0px">Control Network</div>
<svg class="ab" style="left:38.8px;top:527.1px" width="7" height="7"><rect x="0.5" y="0.5" width="6" height="6" fill="#f8f8f8" stroke="#c4c4c4"/><path d="M1.8,3.5H5.2" stroke="#404040" stroke-width="0.8"/><path d="M3.5,1.8V5.2" stroke="#404040" stroke-width="0.8"/></svg>
<svg class="ab" style="left:49.0px;top:525.6px" width="19" height="10"><polygon points="3.8,0.8 7.6,8.2 0,8.2" fill="#1018c0"/><circle cx="3.8" cy="4.6" r="1.3" fill="#e8e050"/><path d="M1.5,6.5h4.6" stroke="#f0f0a0" stroke-width="0.6"/><rect x="8" y="0" width="10" height="9.5" fill="#484818"/><path d="M9,2h4M9,4h3" stroke="#c0c060" stroke-width="0.8"/><circle cx="14.5" cy="6.3" r="3.3" fill="#f0e810"/><path d="M13.3,5.2Q14.5,3.8 15.7,5.2L14.5,6.6V7.4" stroke="#404000" stroke-width="0.8" fill="none"/></svg>
<div class="t" style="left:69.5px;top:527.1px">20-DCS-01</div>
<svg class="ab" style="left:38.8px;top:537.2px" width="7" height="7"><rect x="0.5" y="0.5" width="6" height="6" fill="#f8f8f8" stroke="#c4c4c4"/><path d="M1.8,3.5H5.2" stroke="#404040" stroke-width="0.8"/><path d="M3.5,1.8V5.2" stroke="#404040" stroke-width="0.8"/></svg>
<svg class="ab" style="left:49.0px;top:535.7px" width="19" height="10"><polygon points="3.8,0.8 7.6,8.2 0,8.2" fill="#1018c0"/><circle cx="3.8" cy="4.6" r="1.3" fill="#e8e050"/><path d="M1.5,6.5h4.6" stroke="#f0f0a0" stroke-width="0.6"/><rect x="8" y="0" width="10" height="9.5" fill="#484818"/><path d="M9,2h4M9,4h3" stroke="#c0c060" stroke-width="0.8"/><circle cx="14.5" cy="6.3" r="3.3" fill="#f0e810"/><path d="M13.3,5.2Q14.5,3.8 15.7,5.2L14.5,6.6V7.4" stroke="#404000" stroke-width="0.8" fill="none"/></svg>
<div class="t" style="left:69.5px;top:537.2px">20-DCS-02</div>
<svg class="ab" style="left:38.8px;top:547.3px" width="7" height="7"><rect x="0.5" y="0.5" width="6" height="6" fill="#f8f8f8" stroke="#c4c4c4"/><path d="M1.8,3.5H5.2" stroke="#404040" stroke-width="0.8"/><path d="M3.5,1.8V5.2" stroke="#404040" stroke-width="0.8"/></svg>
<svg class="ab" style="left:49.0px;top:545.8px" width="19" height="10"><polygon points="3.8,0.8 7.6,8.2 0,8.2" fill="#1018c0"/><circle cx="3.8" cy="4.6" r="1.3" fill="#e8e050"/><path d="M1.5,6.5h4.6" stroke="#f0f0a0" stroke-width="0.6"/><polygon points="8.5,0.5 16,1.5 16,7.5 8.5,6.5" fill="#28a028"/><polygon points="9.5,1.5 15,2.2 15,6 9.5,5.5" fill="#50c850"/><rect x="10" y="8" width="5" height="2" fill="#206020"/></svg>
<div class="t" style="left:69.5px;top:547.3px">20-OS-01</div>
<svg class="ab" style="left:38.8px;top:557.4px" width="7" height="7"><rect x="0.5" y="0.5" width="6" height="6" fill="#f8f8f8" stroke="#c4c4c4"/><path d="M1.8,3.5H5.2" stroke="#404040" stroke-width="0.8"/><path d="M3.5,1.8V5.2" stroke="#404040" stroke-width="0.8"/></svg>
<svg class="ab" style="left:49.0px;top:555.9px" width="19" height="10"><polygon points="3.8,0.8 7.6,8.2 0,8.2" fill="#1018c0"/><circle cx="3.8" cy="4.6" r="1.3" fill="#e8e050"/><path d="M1.5,6.5h4.6" stroke="#f0f0a0" stroke-width="0.6"/><polygon points="8.5,0.5 16,1.5 16,7.5 8.5,6.5" fill="#28a028"/><polygon points="9.5,1.5 15,2.2 15,6 9.5,5.5" fill="#50c850"/><rect x="10" y="8" width="5" height="2" fill="#206020"/><circle cx="14.5" cy="6.8" r="3" fill="#f0e810"/><path d="M13.3,5.8Q14.5,4.4 15.7,5.8L14.5,7.2V8" stroke="#404000" stroke-width="0.8" fill="none"/></svg>
<div class="t" style="left:69.5px;top:557.4px">20-OS-02</div>
<svg class="ab" style="left:38.8px;top:567.5px" width="7" height="7"><rect x="0.5" y="0.5" width="6" height="6" fill="#f8f8f8" stroke="#c4c4c4"/><path d="M1.8,3.5H5.2" stroke="#404040" stroke-width="0.8"/><path d="M3.5,1.8V5.2" stroke="#404040" stroke-width="0.8"/></svg>
<svg class="ab" style="left:49.0px;top:566.0px" width="19" height="10"><polygon points="3.8,0.8 7.6,8.2 0,8.2" fill="#1018c0"/><circle cx="3.8" cy="4.6" r="1.3" fill="#e8e050"/><path d="M1.5,6.5h4.6" stroke="#f0f0a0" stroke-width="0.6"/><polygon points="8.5,0.5 16,1.5 16,7.5 8.5,6.5" fill="#28a028"/><polygon points="9.5,1.5 15,2.2 15,6 9.5,5.5" fill="#50c850"/><rect x="10" y="8" width="5" height="2" fill="#206020"/></svg>
<div class="t" style="left:69.5px;top:567.5px">20-OS-03</div>
</div>
<div class="ab" style="left:137px;top:66px;width:11px;height:578px;background:#ecebe6"></div>
<div class="btn" style="left:137px;top:66px;width:11px;height:10px"></div>
<svg class="ab" style="left:140px;top:69px" width="5" height="3"><polygon points="2.5,0 5,3 0,3" fill="#000"/></svg>
<div class="btn" style="left:137px;top:252px;width:11px;height:222px"></div>
<div class="btn" style="left:137px;top:634px;width:11px;height:10px"></div>
<svg class="ab" style="left:140px;top:638px" width="5" height="3"><polygon points="0,0 5,0 2.5,3" fill="#000"/></svg>
<div class="ab" style="left:6px;top:644px;width:131px;height:10px;background:#ecebe6"></div>
<div class="btn" style="left:6px;top:644px;width:10px;height:10px"></div>
<svg class="ab" style="left:9px;top:646px" width="3" height="5"><polygon points="3,0 3,5 0,2.5" fill="#000"/></svg>
<div class="btn" style="left:16px;top:644px;width:96px;height:10px"></div>
<div class="btn" style="left:127px;top:644px;width:10px;height:10px"></div>
<svg class="ab" style="left:131px;top:646px" width="3" height="5"><polygon points="0,0 0,5 3,2.5" fill="#000"/></svg>
<div class="ab" style="left:137px;top:644px;width:11px;height:10px;background:#d4d0c8"></div>
<div class="ab" style="left:151px;top:65px;width:914px;height:589px;background:#fff;border-top:1px solid #404040;border-left:1px solid #404040"></div>
<div class="ab" style="left:1064px;top:66px;width:1px;height:588px;background:#e6e6e6"></div>
<div class="ab" style="left:152px;top:66px;width:224px;height:10px;background:#d4d0c8;border-top:1px solid #fff;border-left:1px solid #fff;border-right:1px solid #808080;border-bottom:1px solid #808080"></div>
<div class="t" style="left:155px;top:67.5px">Name</div>
<div class="ab" style="left:376px;top:66px;width:121px;height:10px;background:#d4d0c8;border-top:1px solid #fff;border-left:1px solid #fff;border-right:1px solid #808080;border-bottom:1px solid #808080"></div>
<div class="t" style="left:379px;top:67.5px">Type</div>
<div class="ab" style="left:497px;top:66px;width:164px;height:10px;background:#d4d0c8;border-top:1px solid #fff;border-left:1px solid #fff;border-right:1px solid #808080;border-bottom:1px solid #808080"></div>
<div class="t" style="left:500px;top:67.5px">Parameter Value</div>
<div class="ab" style="left:661px;top:66px;width:68px;height:10px;background:#d4d0c8;border-top:1px solid #fff;border-left:1px solid #fff;border-right:1px solid #808080;border-bottom:1px solid #808080"></div>
<div class="t" style="left:664px;top:67.5px">Filtering</div>
<div class="ab" style="left:729px;top:66px;width:112px;height:10px;background:#d4d0c8;border-top:1px solid #fff;border-left:1px solid #fff;border-right:1px solid #808080;border-bottom:1px solid #808080"></div>
<div class="t" style="left:732px;top:67.5px">Parameter Type</div>
<div class="ab" style="left:841px;top:66px;width:60px;height:10px;background:#d4d0c8;border-top:1px solid #fff;border-left:1px solid #fff;border-right:1px solid #808080;border-bottom:1px solid #808080"></div>
<div class="t" style="left:844px;top:67.5px">Protected</div>
<div class="ab" style="left:901px;top:66px;width:41px;height:10px;background:#d4d0c8;border-top:1px solid #fff;border-left:1px solid #fff;border-right:1px solid #808080;border-bottom:1px solid #808080"></div>
<div class="t" style="left:904px;top:67.5px">Group N...</div>
<div class="ab" style="left:942px;top:66px;width:123px;height:10px;background:#d4d0c8;border-top:1px solid #fff;border-left:1px solid #fff;border-right:1px solid #808080;border-bottom:1px solid #808080"></div>
<svg class="ab" style="left:154px;top:77.3px" width="11" height="10"><rect x="0" y="0" width="11" height="4" fill="#0000c8"/><path d="M2,3 Q5.5,0 9,3" stroke="#5080ff" stroke-width="0.8" fill="none"/><rect x="3" y="4" width="5" height="5" fill="#d0e8f8"/><path d="M0.5,9.5L4,5" stroke="#e0b020" stroke-width="1.3"/><rect x="8" y="5" width="2" height="4" fill="#c8c8c8"/></svg>
<div class="t" style="left:166px;top:78.9px;letter-spacing:-0.3px">ABNORM_ACTIVE</div>
<div class="t" style="left:379px;top:78.9px">Parameter</div>
<div class="t" style="left:501px;top:78.9px">False</div>
<div class="t" style="left:664px;top:78.9px">&lt;On-line&gt;</div>
<div class="t" style="left:732px;top:78.9px">Boolean</div>
<div class="t" style="left:844px;top:78.9px">True</div>
<div class="t" style="left:905px;top:78.9px">Alarm</div>
<svg class="ab" style="left:154px;top:88.0px" width="11" height="10"><rect x="0" y="0" width="11" height="4" fill="#0000c8"/><path d="M2,3 Q5.5,0 9,3" stroke="#5080ff" stroke-width="0.8" fill="none"/><rect x="3" y="4" width="5" height="5" fill="#d0e8f8"/><path d="M0.5,9.5L4,5" stroke="#e0b020" stroke-width="1.3"/><rect x="8" y="5" width="2" height="4" fill="#c8c8c8"/></svg>
<div class="t" style="left:166px;top:89.6px;letter-spacing:-0.3px">BAD_ACTIVE</div>
<div class="t" style="left:379px;top:89.6px">Parameter</div>
<div class="t" style="left:501px;top:89.6px">False</div>
<div class="t" style="left:664px;top:89.6px">&lt;On-line&gt;</div>
<div class="t" style="left:732px;top:89.6px">Boolean</div>
<div class="t" style="left:844px;top:89.6px">True</div>
<div class="t" style="left:905px;top:89.6px">Alarm</div>
<svg class="ab" style="left:154px;top:98.8px" width="11" height="10"><rect x="0" y="0" width="11" height="4" fill="#0000c8"/><path d="M2,3 Q5.5,0 9,3" stroke="#5080ff" stroke-width="0.8" fill="none"/><rect x="3" y="4" width="5" height="5" fill="#d0e8f8"/><path d="M0.5,9.5L4,5" stroke="#e0b020" stroke-width="1.3"/><rect x="8" y="5" width="2" height="4" fill="#c8c8c8"/></svg>
<div class="t" style="left:166px;top:100.4px;letter-spacing:-0.3px">BLOCK_ERR</div>
<div class="t" style="left:379px;top:100.4px">Parameter</div>
<div class="t" style="left:664px;top:100.4px">&lt;On-line&gt;</div>
<div class="t" style="left:732px;top:100.4px">Option bitstring</div>
<div class="t" style="left:844px;top:100.4px">True</div>
<div class="t" style="left:905px;top:100.4px">Alarm</div>
<svg class="ab" style="left:154px;top:109.5px" width="11" height="10"><rect x="0" y="0" width="11" height="4" fill="#0000c8"/><path d="M2,3 Q5.5,0 9,3" stroke="#5080ff" stroke-width="0.8" fill="none"/><rect x="3" y="4" width="5" height="5" fill="#d0e8f8"/><path d="M0.5,9.5L4,5" stroke="#e0b020" stroke-width="1.3"/><rect x="8" y="5" width="2" height="4" fill="#c8c8c8"/></svg>
<div class="t" style="left:166px;top:111.1px;letter-spacing:-0.3px">EXEC_TIME</div>
<div class="t" style="left:379px;top:111.1px">Parameter</div>
<div class="t" style="left:501px;top:111.1px">0</div>
<div class="t" style="left:664px;top:111.1px">&lt;On-line&gt;</div>
<div class="t" style="left:732px;top:111.1px">32 bit signed integer</div>
<div class="t" style="left:844px;top:111.1px">True</div>
<div class="t" style="left:905px;top:111.1px">Misc</div>
<svg class="ab" style="left:154px;top:120.3px" width="11" height="10"><rect x="0" y="0" width="11" height="4" fill="#0000c8"/><path d="M2,3 Q5.5,0 9,3" stroke="#5080ff" stroke-width="0.8" fill="none"/><rect x="3" y="4" width="5" height="5" fill="#d0e8f8"/><path d="M0.5,9.5L4,5" stroke="#e0b020" stroke-width="1.3"/><rect x="8" y="5" width="2" height="4" fill="#c8c8c8"/></svg>
<div class="t" style="left:166px;top:121.9px;letter-spacing:-0.3px">MCOMMAND</div>
<div class="t" style="left:379px;top:121.9px">Parameter</div>
<div class="t" style="left:501px;top:121.9px"><span style="display:inline-block;width:7.60px;font-size:8.0px;line-height:8px;vertical-align:top;font-weight:500">服</span><span style="display:inline-block;width:7.60px;font-size:8.0px;line-height:8px;vertical-align:top;font-weight:500">务</span><span style="display:inline-block;width:7.60px;font-size:8.0px;line-height:8px;vertical-align:top;font-weight:500">中</span></div>
<div class="t" style="left:664px;top:121.9px">&lt;On-line&gt;</div>
<div class="t" style="left:732px;top:121.9px">Named Set</div>
<div class="t" style="left:844px;top:121.9px">False</div>
<div class="t" style="left:905px;top:121.9px">Tuning</div>
<svg class="ab" style="left:154px;top:131.0px" width="11" height="10"><rect x="0" y="0" width="11" height="4" fill="#0000c8"/><path d="M2,3 Q5.5,0 9,3" stroke="#5080ff" stroke-width="0.8" fill="none"/><rect x="3" y="4" width="5" height="5" fill="#d0e8f8"/><path d="M0.5,9.5L4,5" stroke="#e0b020" stroke-width="1.3"/><rect x="8" y="5" width="2" height="4" fill="#c8c8c8"/></svg>
<div class="t" style="left:166px;top:132.6px;letter-spacing:-0.3px">MERROR</div>
<div class="t" style="left:379px;top:132.6px">Parameter</div>
<div class="t" style="left:664px;top:132.6px">&lt;On-line&gt;</div>
<div class="t" style="left:732px;top:132.6px">Option bitstring</div>
<div class="t" style="left:844px;top:132.6px">True</div>
<div class="t" style="left:905px;top:132.6px">Operating</div>
<svg class="ab" style="left:154px;top:141.7px" width="11" height="10"><rect x="0" y="0" width="11" height="4" fill="#0000c8"/><path d="M2,3 Q5.5,0 9,3" stroke="#5080ff" stroke-width="0.8" fill="none"/><rect x="3" y="4" width="5" height="5" fill="#d0e8f8"/><path d="M0.5,9.5L4,5" stroke="#e0b020" stroke-width="1.3"/><rect x="8" y="5" width="2" height="4" fill="#c8c8c8"/></svg>
<div class="t" style="left:166px;top:143.3px;letter-spacing:-0.3px">MERROR_MASK</div>
<div class="t" style="left:379px;top:143.3px">Parameter</div>
<div class="t" style="left:664px;top:143.3px">&lt;Adv. Config&gt;</div>
<div class="t" style="left:732px;top:143.3px">Option bitstring</div>
<div class="t" style="left:844px;top:143.3px">False</div>
<div class="t" style="left:905px;top:143.3px">Tuning</div>
<svg class="ab" style="left:154px;top:152.5px" width="11" height="10"><rect x="0" y="0" width="11" height="4" fill="#0000c8"/><path d="M2,3 Q5.5,0 9,3" stroke="#5080ff" stroke-width="0.8" fill="none"/><rect x="3" y="4" width="5" height="5" fill="#d0e8f8"/><path d="M0.5,9.5L4,5" stroke="#e0b020" stroke-width="1.3"/><rect x="8" y="5" width="2" height="4" fill="#c8c8c8"/></svg>
<div class="t" style="left:166px;top:154.1px;letter-spacing:-0.3px">MSTATE</div>
<div class="t" style="left:379px;top:154.1px">Parameter</div>
<div class="t" style="left:501px;top:154.1px"><span style="display:inline-block;width:7.60px;font-size:8.0px;line-height:8px;vertical-align:top;font-weight:500">服</span><span style="display:inline-block;width:7.60px;font-size:8.0px;line-height:8px;vertical-align:top;font-weight:500">务</span><span style="display:inline-block;width:7.60px;font-size:8.0px;line-height:8px;vertical-align:top;font-weight:500">中</span></div>
<div class="t" style="left:664px;top:154.1px">&lt;On-line&gt;</div>
<div class="t" style="left:732px;top:154.1px">Named Set</div>
<div class="t" style="left:844px;top:154.1px">True</div>
<div class="t" style="left:905px;top:154.1px">Operating</div>
<svg class="ab" style="left:154px;top:163.2px" width="11" height="10"><rect x="0" y="0" width="11" height="4" fill="#0000c8"/><path d="M2,3 Q5.5,0 9,3" stroke="#5080ff" stroke-width="0.8" fill="none"/><rect x="3" y="4" width="5" height="5" fill="#d0e8f8"/><path d="M0.5,9.5L4,5" stroke="#e0b020" stroke-width="1.3"/><rect x="8" y="5" width="2" height="4" fill="#c8c8c8"/></svg>
<div class="t" style="left:166px;top:164.8px;letter-spacing:-0.3px">MSTATUS</div>
<div class="t" style="left:379px;top:164.8px">Parameter</div>
<div class="t" style="left:664px;top:164.8px">&lt;On-line&gt;</div>
<div class="t" style="left:732px;top:164.8px">Option bitstring</div>
<div class="t" style="left:844px;top:164.8px">True</div>
<div class="t" style="left:905px;top:164.8px">Operating</div>
<svg class="ab" style="left:154px;top:174.0px" width="11" height="10"><rect x="0" y="0" width="11" height="4" fill="#0000c8"/><path d="M2,3 Q5.5,0 9,3" stroke="#5080ff" stroke-width="0.8" fill="none"/><rect x="3" y="4" width="5" height="5" fill="#d0e8f8"/><path d="M0.5,9.5L4,5" stroke="#e0b020" stroke-width="1.3"/><rect x="8" y="5" width="2" height="4" fill="#c8c8c8"/></svg>
<div class="t" style="left:166px;top:175.6px;letter-spacing:-0.3px">MSTATUS_MASK</div>
<div class="t" style="left:379px;top:175.6px">Parameter</div>
<div class="t" style="left:664px;top:175.6px">&lt;Adv. Config&gt;</div>
<div class="t" style="left:732px;top:175.6px">Option bitstring</div>
<div class="t" style="left:844px;top:175.6px">False</div>
<div class="t" style="left:905px;top:175.6px">Tuning</div>
<svg class="ab" style="left:154px;top:184.7px" width="11" height="10"><rect x="0" y="0" width="11" height="4" fill="#0000c8"/><path d="M2,3 Q5.5,0 9,3" stroke="#5080ff" stroke-width="0.8" fill="none"/><rect x="3" y="4" width="5" height="5" fill="#d0e8f8"/><path d="M0.5,9.5L4,5" stroke="#e0b020" stroke-width="1.3"/><rect x="8" y="5" width="2" height="4" fill="#c8c8c8"/></svg>
<div class="t" style="left:166px;top:186.3px;letter-spacing:-0.3px">VERSION</div>
<div class="t" style="left:379px;top:186.3px">Parameter</div>
<div class="t" style="left:501px;top:186.3px">1</div>
<div class="t" style="left:664px;top:186.3px">&lt;On-line&gt;</div>
<div class="t" style="left:732px;top:186.3px">32 bit unsigned integer</div>
<div class="t" style="left:844px;top:186.3px">False</div>
<div class="t" style="left:905px;top:186.3px">Operating</div>
<svg class="ab" style="left:154px;top:195.4px" width="11" height="10"><rect x="0" y="0" width="11" height="10" fill="#182058"/><path d="M1,7 L3,3 L5,7 L7,2 L10,6" stroke="#c8d830" stroke-width="1" fill="none"/></svg>
<div class="t" style="left:166px;top:197.0px;letter-spacing:-0.3px">AI1</div>
<div class="ab" style="left:5px;top:654px;width:1060px;height:1px;background:#ecebe6"></div>
<div class="t" style="left:5px;top:657.7px">For Help, press F1</div>
<div class="ab sunk" style="left:739px;top:656px;width:74px;height:10px"></div>
<div class="t" style="left:740px;top:657.7px">User: ADMINISTRATOR</div>
<div class="ab sunk" style="left:815px;top:656px;width:71px;height:10px"></div>
<div class="t" style="left:816px;top:657.7px">12 object(s)</div>
<div class="ab sunk" style="left:888px;top:656px;width:59px;height:10px"></div>
<div class="t" style="left:889px;top:657.7px">Configure non-SIS</div>
<div class="ab sunk" style="left:948px;top:656px;width:59px;height:10px"></div>
<div class="t" style="left:949px;top:657.7px">Download non-SIS</div>
<div class="ab sunk" style="left:1009px;top:656px;width:16px;height:10px"></div>
<div class="ab sunk" style="left:1027px;top:656px;width:17px;height:10px"></div>
<div class="t" style="left:1028px;top:657.7px">NUM</div>
<div class="ab sunk" style="left:1046px;top:656px;width:19px;height:10px"></div>
<div class="ab" style="left:691.0px;top:278.0px;white-space:nowrap;font-weight:300;font-family:'Liberation Serif',serif;font-size:18.5px;line-height:19.0px;color:#ff3030"><span style="display:inline-block;width:9.25px;overflow:visible">5</span><span style="display:inline-block;width:18.50px;overflow:visible">、</span><span style="display:inline-block;width:18.50px;overflow:visible">在</span><span style="display:inline-block;width:18.50px;overflow:visible">控</span><span style="display:inline-block;width:18.50px;overflow:visible">制</span><span style="display:inline-block;width:18.50px;overflow:visible">模</span><span style="display:inline-block;width:18.50px;overflow:visible">块</span><span style="display:inline-block;width:18.50px;overflow:visible">参</span><span style="display:inline-block;width:18.50px;overflow:visible">数</span><span style="display:inline-block;width:18.50px;overflow:visible">，</span><span style="display:inline-block;width:18.50px;overflow:visible">通</span><span style="display:inline-block;width:18.50px;overflow:visible">道</span><span style="display:inline-block;width:18.50px;overflow:visible">组</span><span style="display:inline-block;width:18.50px;overflow:visible">态</span><span style="display:inline-block;width:18.50px;overflow:visible">完</span><span style="display:inline-block;width:18.50px;overflow:visible">成</span><span style="display:inline-block;width:18.50px;overflow:visible">后</span><span style="display:inline-block;width:18.50px;overflow:visible">，</span><span style="display:inline-block;width:18.50px;overflow:visible">保</span><span style="display:inline-block;width:18.50px;overflow:visible">存</span><span style="display:inline-block;width:18.50px;overflow:visible">、</span></div>
<div class="ab" style="left:691.0px;top:296.8px;white-space:nowrap;font-weight:300;font-family:'Liberation Serif',serif;font-size:18.5px;line-height:19.0px;color:#ff3030"><span style="display:inline-block;width:18.50px;overflow:visible">关</span><span style="display:inline-block;width:18.50px;overflow:visible">闭</span><span style="display:inline-block;width:18.50px;overflow:visible">，</span><span style="display:inline-block;width:18.50px;overflow:visible">对</span><span style="display:inline-block;width:18.50px;overflow:visible">控</span><span style="display:inline-block;width:18.50px;overflow:visible">制</span><span style="display:inline-block;width:18.50px;overflow:visible">模</span><span style="display:inline-block;width:18.50px;overflow:visible">块</span><span style="display:inline-block;width:18.50px;overflow:visible">的</span><span style="display:inline-block;width:18.50px;overflow:visible">属</span><span style="display:inline-block;width:18.50px;overflow:visible">性</span><span style="display:inline-block;width:18.50px;overflow:visible">进</span><span style="display:inline-block;width:18.50px;overflow:visible">行</span><span style="display:inline-block;width:18.50px;overflow:visible">组</span><span style="display:inline-block;width:18.50px;overflow:visible">态</span><span style="display:inline-block;width:18.50px;overflow:visible">，</span><span style="display:inline-block;width:18.50px;overflow:visible">包</span><span style="display:inline-block;width:18.50px;overflow:visible">括</span><span style="display:inline-block;width:18.50px;overflow:visible">新</span><span style="display:inline-block;width:18.50px;overflow:visible">增</span></div>
<div class="ab" style="left:691.0px;top:315.6px;white-space:nowrap;font-weight:300;font-family:'Liberation Serif',serif;font-size:18.5px;line-height:19.0px;color:#ff3030"><span style="display:inline-block;width:18.50px;overflow:visible">点</span><span style="display:inline-block;width:18.50px;overflow:visible">描</span><span style="display:inline-block;width:18.50px;overflow:visible">述</span><span style="display:inline-block;width:18.50px;overflow:visible">、</span><span style="display:inline-block;width:18.50px;overflow:visible">扫</span><span style="display:inline-block;width:18.50px;overflow:visible">描</span><span style="display:inline-block;width:18.50px;overflow:visible">时</span><span style="display:inline-block;width:18.50px;overflow:visible">间</span><span style="display:inline-block;width:18.50px;overflow:visible">、</span><span style="display:inline-block;width:18.50px;overflow:visible">画</span><span style="display:inline-block;width:18.50px;overflow:visible">面</span><span style="display:inline-block;width:18.50px;overflow:visible">分</span><span style="display:inline-block;width:18.50px;overflow:visible">配</span><span style="display:inline-block;width:18.50px;overflow:visible">、</span><span style="display:inline-block;width:18.50px;overflow:visible">详</span><span style="display:inline-block;width:18.50px;overflow:visible">细</span><span style="display:inline-block;width:18.50px;overflow:visible">面</span><span style="display:inline-block;width:18.50px;overflow:visible">板</span><span style="display:inline-block;width:18.50px;overflow:visible">、</span><span style="display:inline-block;width:18.50px;overflow:visible">面</span></div>
<div class="ab" style="left:691.0px;top:334.4px;white-space:nowrap;font-weight:300;font-family:'Liberation Serif',serif;font-size:18.5px;line-height:19.0px;color:#ff3030"><span style="display:inline-block;width:18.50px;overflow:visible">板</span><span style="display:inline-block;width:18.50px;overflow:visible">设</span><span style="display:inline-block;width:18.50px;overflow:visible">置</span><span style="display:inline-block;width:18.50px;overflow:visible">、</span><span style="display:inline-block;width:18.50px;overflow:visible">控</span><span style="display:inline-block;width:18.50px;overflow:visible">制</span><span style="display:inline-block;width:18.50px;overflow:visible">器</span><span style="display:inline-block;width:18.50px;overflow:visible">分</span><span style="display:inline-block;width:18.50px;overflow:visible">配</span><span style="display:inline-block;width:18.50px;overflow:visible">。</span></div>
<div class="ab" style="left:301px;top:189px;width:270px;height:333px;background:#d4d0c8;border:1px solid;border-color:#d4d0c8 #404040 #404040 #d4d0c8;box-shadow:inset 1px 1px 0 #fff,inset -1px -1px 0 #808080"></div>
<div class="ab" style="left:303px;top:191px;width:266px;height:11.5px;background:linear-gradient(90deg,#0a246a,#a6caf0)"></div>
<div class="t" style="left:302.5px;top:193px;font-family:'Liberation Serif',serif;font-size:8.4px;font-weight:bold;color:#fff">PI-001 Properties</div>
<div class="btn" style="left:557px;top:193px;width:11px;height:8px"></div>
<svg class="ab" style="left:560px;top:194.5px" width="5" height="5"><path d="M0.5,0.5L4.5,4.5M4.5,0.5L0.5,4.5" stroke="#000" stroke-width="1.2"/></svg>
<div class="ab" style="left:305px;top:219px;width:260px;height:280px;border:1px solid;border-color:#fff #404040 #404040 #fff;box-shadow:inset -1px -1px 0 #808080"></div>
<div class="ab" style="left:308px;top:208px;width:32px;height:11px;background:#d4d0c8;border-top:1px solid #f0efea;border-left:1px solid #f0efea;border-right:1px solid #606060;box-shadow:inset -1px 0 0 #a0a0a0"></div>
<div class="t" style="left:311.0px;top:211.0px;font-family:'Liberation Mono',monospace;font-size:7px;letter-spacing:-0.52px;color:#000">General</div>
<div class="ab" style="left:342px;top:208px;width:40px;height:11px;background:#d4d0c8;border-top:1px solid #f0efea;border-left:1px solid #f0efea;border-right:1px solid #606060;box-shadow:inset -1px 0 0 #a0a0a0"></div>
<div class="t" style="left:345.0px;top:211.0px;font-family:'Liberation Mono',monospace;font-size:7px;letter-spacing:-0.52px;color:#000">Execution</div>
<div class="ab" style="left:383px;top:206px;width:38px;height:14px;background:#d4d0c8;border-top:1px solid #f0efea;border-left:1px solid #f0efea;border-right:1px solid #606060;box-shadow:inset -1px 0 0 #a0a0a0"></div>
<div class="t" style="left:386.0px;top:209.0px;font-family:'Liberation Mono',monospace;font-size:7px;letter-spacing:-0.52px;color:#000">Displays</div>
<div class="ab" style="left:422px;top:208px;width:29px;height:11px;background:#d4d0c8;border-top:1px solid #f0efea;border-left:1px solid #f0efea;border-right:1px solid #606060;box-shadow:inset -1px 0 0 #a0a0a0"></div>
<div class="t" style="left:425.0px;top:211.0px;font-family:'Liberation Mono',monospace;font-size:7px;letter-spacing:-0.52px;color:#000">Tools</div>
<div class="ab" style="left:302px;top:219px;font-family:'Liberation Serif',serif;font-size:18px;line-height:18px;color:#ff2020;white-space:nowrap;font-weight:300">描述</div>
<div class="ab" style="left:343px;top:219px;font-family:'Liberation Serif',serif;font-size:9.5px;line-height:10px;color:#ff2020;white-space:nowrap">扫描时间</div>
<div class="ab" style="left:386px;top:221px;font-family:'Liberation Serif',serif;font-size:9.5px;line-height:10px;color:#ff2020;white-space:nowrap">画面分配<br>详细面板<br>面板设置</div>
<div class="ab" style="left:430px;top:221px;font-family:'Liberation Serif',serif;font-size:9.5px;line-height:10px;color:#ff2020;white-space:nowrap">控制器分配</div>
<div class="t" style="left:329px;top:244.2px;font-family:'Liberation Mono',monospace;font-size:7px;letter-spacing:-0.52px;color:#000">Primary control</div>
<div class="ab" style="left:329px;top:255px;width:118px;height:13px;background:#fff;border:1px solid;border-color:#808080 #fff #fff #808080;box-shadow:inset 1px 1px 0 #404040"></div>
<div class="btn" style="left:452px;top:255px;width:46px;height:13px"></div>
<div class="t" style="left:457px;top:258px;font-family:'Liberation Mono',monospace;font-size:7px;letter-spacing:-0.52px;color:#000">Browse...</div>
<div class="t" style="left:329px;top:274.2px;font-family:'Liberation Mono',monospace;font-size:7px;letter-spacing:-0.52px;color:#000">Detail:</div>
<div class="ab" style="left:329px;top:283px;width:118px;height:13px;background:#fff;border:1px solid;border-color:#808080 #fff #fff #808080;box-shadow:inset 1px 1px 0 #404040"></div>
<div class="btn" style="left:452px;top:283px;width:46px;height:13px"></div>
<div class="t" style="left:457px;top:286px;font-family:'Liberation Mono',monospace;font-size:7px;letter-spacing:-0.52px;color:#000">Browse...</div>
<div class="t" style="left:329px;top:302.2px;font-family:'Liberation Mono',monospace;font-size:7px;letter-spacing:-0.52px;color:#000">Faceplate:</div>
<div class="ab" style="left:329px;top:313px;width:118px;height:13px;background:#fff;border:1px solid;border-color:#808080 #fff #fff #808080;box-shadow:inset 1px 1px 0 #404040"></div>
<div class="t" style="left:332px;top:316px;font-family:'Liberation Mono',monospace;font-size:7px;letter-spacing:-0.52px;color:#000">MOD_FP</div>
<div class="btn" style="left:452px;top:313px;width:46px;height:13px"></div>
<div class="t" style="left:457px;top:316px;font-family:'Liberation Mono',monospace;font-size:7px;letter-spacing:-0.52px;color:#000">Browse...</div>
<div class="ab" style="left:413px;top:502.5px;width:49px;height:14px;border:1px solid #202020"></div>
<div class="btn" style="left:414px;top:503px;width:48px;height:13px"></div>
<div class="t" style="left:414px;top:506.3px;width:48px;text-align:center"><span style="display:inline-block;width:8.00px;font-size:7.8px;line-height:8px;vertical-align:top;font-weight:500">确</span><span style="display:inline-block;width:8.00px;font-size:7.8px;line-height:8px;vertical-align:top;font-weight:500">定</span></div>
<div class="btn" style="left:466px;top:503px;width:47px;height:13px"></div>
<div class="t" style="left:466px;top:506.3px;width:47px;text-align:center"><span style="display:inline-block;width:8.00px;font-size:7.8px;line-height:8px;vertical-align:top;font-weight:500">取</span><span style="display:inline-block;width:8.00px;font-size:7.8px;line-height:8px;vertical-align:top;font-weight:500">消</span></div>
<div class="btn" style="left:517px;top:503px;width:48px;height:13px"></div>
<div class="t" style="left:517px;top:506.3px;width:48px;text-align:center"><span style="display:inline-block;width:8.00px;font-size:7.8px;line-height:8px;vertical-align:top;font-weight:500">帮</span><span style="display:inline-block;width:8.00px;font-size:7.8px;line-height:8px;vertical-align:top;font-weight:500">助</span></div>
</div></body></html>
